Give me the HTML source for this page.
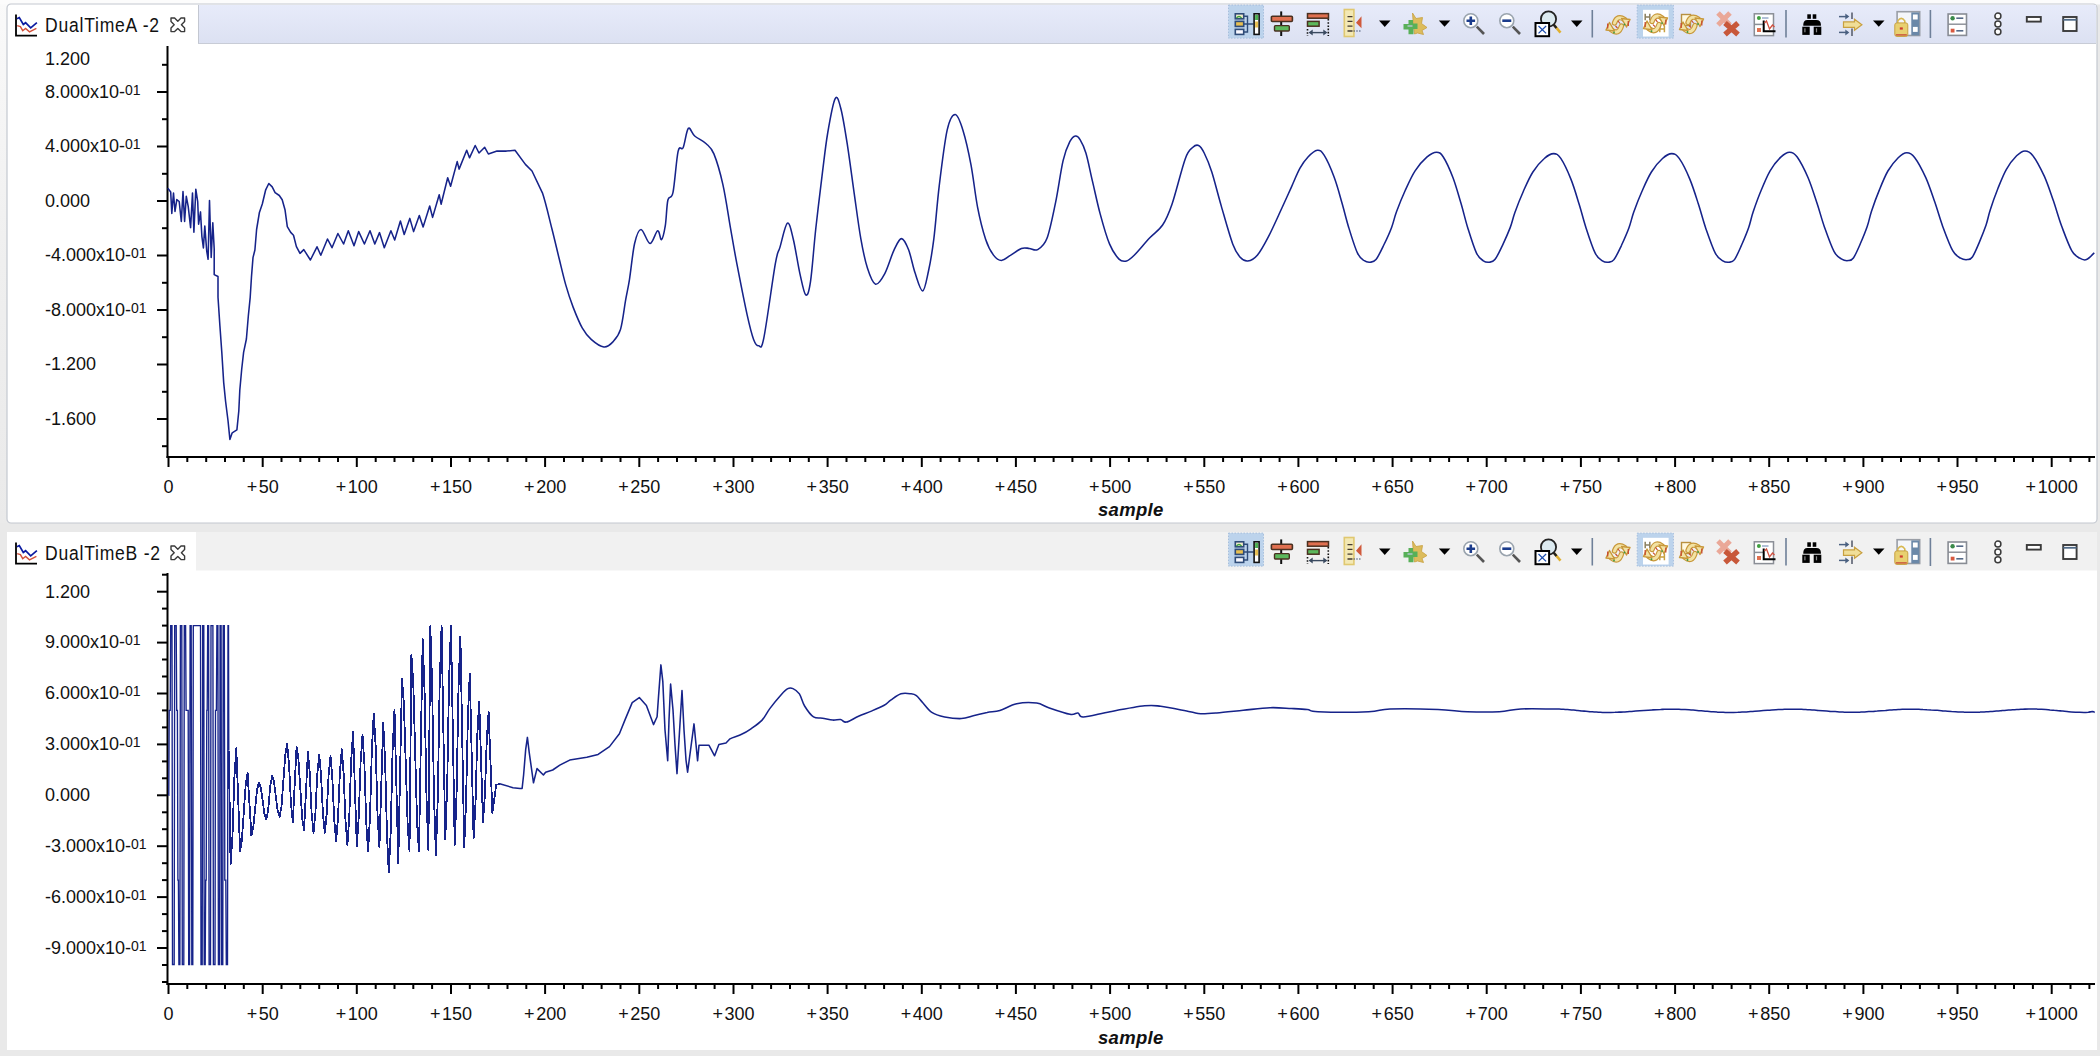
<!DOCTYPE html>
<html><head><meta charset="utf-8"><title>DualTime</title>
<style>
html,body{margin:0;padding:0;width:2100px;height:1056px;overflow:hidden;background:#e9e9e9;}
svg{display:block;font-family:"Liberation Sans", sans-serif;}
</style></head><body>
<svg width="2100" height="1056" viewBox="0 0 2100 1056" fill="#111">
<rect x="0" y="0" width="2100" height="1056" fill="#e9e9e9"/>
<defs><linearGradient id="tb" x1="0" y1="0" x2="0" y2="1"><stop offset="0" stop-color="#e7ebfa"/><stop offset="1" stop-color="#dce1f2"/></linearGradient><linearGradient id="ls" x1="0" y1="0" x2="0" y2="1"><stop offset="0" stop-color="#fafafa"/><stop offset="0.5" stop-color="#efefef"/><stop offset="1" stop-color="#eaeaea"/></linearGradient></defs>
<rect x="0" y="0" width="8" height="523" fill="url(#ls)"/>
<rect x="0" y="0" width="2100" height="4.5" fill="#fcfcfc"/>
<rect x="7" y="4" width="2090" height="519" rx="4" fill="#fff" stroke="#c4c8d0" stroke-width="1.2"/>
<rect x="198" y="5" width="1898" height="38.5" fill="url(#tb)"/>
<line x1="198.5" y1="5" x2="198.5" y2="43.5" stroke="#c3c7d1"/>
<line x1="198" y1="43.5" x2="2096" y2="43.5" stroke="#c8ccd6"/>
<g transform="translate(15 14)"><path d="M1 0.5 V21.6 H22" fill="none" stroke="#000" stroke-width="1.8"/><path d="M2 4.8 L4.3 3.6 L8.3 10.4 L10.6 8.7 L15.7 13.8 L21.9 8.7" fill="none" stroke="#0a1aa0" stroke-width="1.7"/><path d="M2.2 11.6 L5.4 12.7 L7.7 16.7 L10.6 14.4 L14.5 17.8 L21.4 14.4" fill="none" stroke="#d2503a" stroke-width="1.4"/></g>
<text transform="translate(45 31.5) scale(0.9 1)" x="0" y="0" font-size="19.5" letter-spacing="0.85">DualTimeA -2</text>
<g transform="translate(170 17)"><path d="M1 1 H4.6 L7.8 4.2 L11 1 H14.6 V4.6 L11.4 7.8 L14.6 11 V14.6 H11 L7.8 11.4 L4.6 14.6 H1 V11 L4.2 7.8 L1 4.6 Z" fill="#fff" stroke="#3a3a3a" stroke-width="1.4" stroke-linejoin="round"/></g>
<rect x="1228.5" y="5.1" width="35" height="33" fill="#bcd3ec" stroke="#a6bedc" stroke-width="1" stroke-dasharray="1.5 1.5"/><g transform="translate(1234.5 13)"><rect x="0.8" y="0.8" width="8.4" height="5" fill="#f4eccc" stroke="#2f4c78" stroke-width="1.6"/><path d="M2 5 q2.5 -3 5 0" fill="none" stroke="#3aa040" stroke-width="1.4"/><rect x="0.8" y="8.4" width="8.4" height="5" fill="#e8bf50" stroke="#2f4c78" stroke-width="1.6"/><rect x="0.8" y="16.4" width="8.4" height="5" fill="#f8f8ff" stroke="#2f4c78" stroke-width="1.6"/><path d="M9 3.3 H13 V19 H9 M9 11 H19" fill="none" stroke="#2f4c78" stroke-width="1.4"/><rect x="19.6" y="0.8" width="5" height="20.6" fill="#fff" stroke="#111" stroke-width="1.6"/><rect x="20.6" y="2" width="3" height="5" fill="#4caf50"/><rect x="20.6" y="8.5" width="3" height="6" fill="#e8bf50"/></g>
<g transform="translate(1270.5 11.4)"><line x1="10.7" y1="0" x2="10.7" y2="24.6" stroke="#111" stroke-width="2"/><rect x="0.9" y="4.9" width="21" height="5.2" rx="1" fill="#e07050" stroke="#4a3020" stroke-width="1.6"/><rect x="4" y="14.2" width="14.8" height="5.4" rx="1" fill="#5cb85c" stroke="#4a3020" stroke-width="1.4"/></g>
<g transform="translate(1306.7 13)"><rect x="0.8" y="0.6" width="21" height="4.6" fill="#e07050" stroke="#4a3020" stroke-width="1.5"/><rect x="0.8" y="8.4" width="11.6" height="4.8" fill="#5cb85c" stroke="#4a3020" stroke-width="1.5"/><path d="M0.8 16 V23 M21.6 6 V23" stroke="#111" stroke-width="1.6" stroke-dasharray="1.6 1.6"/><path d="M3 19.6 H19.5" stroke="#3a4a60" stroke-width="1.4"/><path d="M2 19.6 l4 -3 v6 z M20.6 19.6 l-4 -3 v6 z" fill="#3a4a60"/></g>
<g transform="translate(1343.5 8.7)"><rect x="0.8" y="0.8" width="9.6" height="27" fill="#f3e8b4" stroke="#e0c870" stroke-width="1.6"/><path d="M4 8 H9 M4 12.6 H9 M4 17.4 H9 M4 22.3 H9" stroke="#443a30" stroke-width="1.3"/><path d="M18 7.5 L12.5 14 L18 19.5 Z" fill="#d05a3c"/><path d="M10 22.3 H17" stroke="#304060" stroke-width="1.2" stroke-dasharray="1.4 1.4"/></g>
<path d="M1379 20.6 h11.5 l-5.75 6.3 z" fill="#000"/>
<g transform="translate(1402.5 12.5)"><path d="M10 0.5 L13.5 6 L20 5 L19 11 L24.5 15 L19.5 18 L21 22 L15 20.5 L12 21.5 L11 14 Z" fill="#dcbc5c" stroke="#c8a040" stroke-width="0.8"/><path d="M6 7.5 H10.5 V11 H15 V16.5 H11 V21.8 H6 V17 H1 V11.5 H6 Z" fill="#58b058"/><path d="M5 13.5 h5" stroke="#b8c8d8" stroke-width="1.4"/></g>
<path d="M1438.8 20.5 h11.5 l-5.75 6.3 z" fill="#000"/>
<g transform="translate(1462.5 12.4)"><circle cx="8.3" cy="8.3" r="7" fill="#fff" stroke="#9aa4ae" stroke-width="1.6"/><path d="M8.3 4 V12.6 M4 8.3 H12.6" stroke="#1b3c8c" stroke-width="2.6"/><path d="M14.3 14.3 L21.5 21.6" stroke="#555" stroke-width="2.6"/></g>
<g transform="translate(1498.5 12.4)"><circle cx="8.3" cy="8.3" r="7" fill="#fff" stroke="#9aa4ae" stroke-width="1.6"/><path d="M3.8 8.3 H12.8" stroke="#1b3c8c" stroke-width="2.6"/><path d="M14.3 14.3 L21.5 21.6" stroke="#555" stroke-width="2.6"/></g>
<g transform="translate(1534.5 10)"><circle cx="14" cy="9" r="7.6" fill="#dceaf0" stroke="#222" stroke-width="1.8"/><path d="M19.5 15 L26 22.6" stroke="#e0b030" stroke-width="2.6"/><path d="M19 14.5 L22 18" stroke="#222" stroke-width="2.4"/><rect x="1" y="13" width="13.6" height="13.2" fill="#fff" stroke="#000" stroke-width="2"/><path d="M4 16 L11.6 23.4 M11.6 16 L4 23.4" stroke="#2050b0" stroke-width="1.3"/></g>
<path d="M1571 20.6 h11.5 l-5.75 6.3 z" fill="#000"/>
<line x1="1592.3" y1="10" x2="1592.3" y2="37.5" stroke="#6f8099" stroke-width="1.6"/>
<g transform="translate(1606.5 12)"><path d="M8 11 Q11 2.5 18 7.5" fill="none" stroke="#c8983a" stroke-width="5.4" stroke-linecap="round"/><path d="M8 11 Q11 2.5 18 7.5" fill="none" stroke="#f2e2a4" stroke-width="3" stroke-linecap="round"/><path d="M15 14 Q12 23.5 5 18" fill="none" stroke="#c8983a" stroke-width="5.4" stroke-linecap="round"/><path d="M15 14 Q12 23.5 5 18" fill="none" stroke="#f2e2a4" stroke-width="3" stroke-linecap="round"/><path d="M15 6.5 L23.5 7.5 L20 15 Z" fill="#f2e2a4" stroke="#c8983a" stroke-width="1.4" stroke-linejoin="round"/><path d="M8 19 L-0.5 18 L3 10.5 Z" fill="#f2e2a4" stroke="#c8983a" stroke-width="1.4" stroke-linejoin="round"/><path d="M21.8 9 V14 M1.2 11.5 V16.5" stroke="#c84a30" stroke-width="1.3"/><path d="M11.5 9 l2 2.5 M11 16 l-2 -2" stroke="#c84a30" stroke-width="1.2"/><circle cx="18" cy="12.5" r="0.9" fill="#3a9a40"/><circle cx="7.5" cy="20.5" r="0.9" fill="#3a9a40"/></g>
<rect x="1637.2" y="5.1" width="36.2" height="33" fill="#bcd3ec" stroke="#a6bedc" stroke-width="1" stroke-dasharray="1.5 1.5"/><rect x="1643" y="9.8" width="25.6" height="26.7" fill="#fff"/><g transform="translate(1643 9.8)"><path d="M2.2 4 V10.5 M6.8 4 V10.5 M2.2 7.2 H6.8" stroke="#8a8060" stroke-width="1.5"/><path d="M16.8 16 V22.5 M21.4 16 V22.5 M16.8 19.2 H21.4" stroke="#c8a040" stroke-width="1.5"/><g transform="translate(1 0.5) scale(1 1.02)"><path d="M8 11 Q11 2.5 18 7.5" fill="none" stroke="#c8983a" stroke-width="5.4" stroke-linecap="round"/><path d="M8 11 Q11 2.5 18 7.5" fill="none" stroke="#f2e2a4" stroke-width="3" stroke-linecap="round"/><path d="M15 14 Q12 23.5 5 18" fill="none" stroke="#c8983a" stroke-width="5.4" stroke-linecap="round"/><path d="M15 14 Q12 23.5 5 18" fill="none" stroke="#f2e2a4" stroke-width="3" stroke-linecap="round"/><path d="M15 6.5 L23.5 7.5 L20 15 Z" fill="#f2e2a4" stroke="#c8983a" stroke-width="1.4" stroke-linejoin="round"/><path d="M8 19 L-0.5 18 L3 10.5 Z" fill="#f2e2a4" stroke="#c8983a" stroke-width="1.4" stroke-linejoin="round"/><path d="M21.8 9 V14 M1.2 11.5 V16.5" stroke="#c84a30" stroke-width="1.3"/><path d="M11.5 9 l2 2.5 M11 16 l-2 -2" stroke="#c84a30" stroke-width="1.2"/><circle cx="18" cy="12.5" r="0.9" fill="#3a9a40"/><circle cx="7.5" cy="20.5" r="0.9" fill="#3a9a40"/></g></g>
<g transform="translate(1678 11)"><rect x="3.5" y="3.5" width="9" height="11" fill="#fff8e0" stroke="#b89040" stroke-width="1.4"/><g transform="translate(2 0.5)"><path d="M8 11 Q11 2.5 18 7.5" fill="none" stroke="#c8983a" stroke-width="5.4" stroke-linecap="round"/><path d="M8 11 Q11 2.5 18 7.5" fill="none" stroke="#f2e2a4" stroke-width="3" stroke-linecap="round"/><path d="M15 14 Q12 23.5 5 18" fill="none" stroke="#c8983a" stroke-width="5.4" stroke-linecap="round"/><path d="M15 14 Q12 23.5 5 18" fill="none" stroke="#f2e2a4" stroke-width="3" stroke-linecap="round"/><path d="M15 6.5 L23.5 7.5 L20 15 Z" fill="#f2e2a4" stroke="#c8983a" stroke-width="1.4" stroke-linejoin="round"/><path d="M8 19 L-0.5 18 L3 10.5 Z" fill="#f2e2a4" stroke="#c8983a" stroke-width="1.4" stroke-linejoin="round"/><path d="M21.8 9 V14 M1.2 11.5 V16.5" stroke="#c84a30" stroke-width="1.3"/><path d="M11.5 9 l2 2.5 M11 16 l-2 -2" stroke="#c84a30" stroke-width="1.2"/><circle cx="18" cy="12.5" r="0.9" fill="#3a9a40"/><circle cx="7.5" cy="20.5" r="0.9" fill="#3a9a40"/></g></g>
<g transform="translate(1716 11)"><path d="M2 2 L14 14 M14 2 L2 14" stroke="#eaa898" stroke-width="5"/><path d="M9 12 L22 23.5 M22 12 L9 23.5" stroke="#c8583a" stroke-width="5.4"/></g>
<g transform="translate(1753.5 13)"><rect x="0.8" y="0.8" width="19.2" height="21.8" fill="#fff" stroke="#8a8e96" stroke-width="1.5"/><line x1="0.8" y1="11.4" x2="10" y2="11.4" stroke="#8a8e96" stroke-width="1.5"/><circle cx="5.4" cy="5" r="2" fill="#40a040"/><path d="M8.5 5 H15" stroke="#6080b0" stroke-width="1"/><rect x="3.5" y="15" width="4" height="4" fill="#e07050"/><path d="M10.2 7.5 V18.3 H22" fill="none" stroke="#000" stroke-width="2"/><path d="M11 10 L13 8 L16 16 L19 12 L21 14" fill="none" stroke="#d05040" stroke-width="1.3"/></g>
<line x1="1786" y1="10" x2="1786" y2="37.5" stroke="#6f8099" stroke-width="1.6"/>
<g transform="translate(1802.3 14.3)"><rect x="5" y="0" width="3.6" height="4.5" fill="#000"/><rect x="10.4" y="0" width="3.6" height="4.5" fill="#000"/><path d="M1 10.5 Q1 6 5 5.8 H14 Q18.6 6 18.6 10.5 V11.5 H1 Z" fill="#000"/><rect x="0" y="12.4" width="7.4" height="8.2" fill="#000"/><rect x="11.4" y="12.4" width="7.6" height="8.2" fill="#000"/><rect x="2" y="14" width="1.2" height="4" fill="#888"/><rect x="13.6" y="14" width="1.2" height="4" fill="#888"/></g>
<g transform="translate(1838.5 12.4)"><path d="M0.5 4.2 H9" stroke="#4a6080" stroke-width="1.5"/><path d="M10.8 4.2 l-4 -3 v6 z" fill="#4a6080"/><path d="M0.5 20 H9" stroke="#4a6080" stroke-width="1.5"/><path d="M10.8 20 l-4 -3 v6 z" fill="#4a6080"/><path d="M13.5 0 V6.5 M13.5 16 V23.5" stroke="#5a6070" stroke-width="1.6"/><path d="M5 9.5 H16 V6.8 L23.4 12.3 L16 17.8 V15 H5 Z" fill="#f0de98" stroke="#c8a040" stroke-width="1.2"/></g>
<path d="M1873 20.5 h11.5 l-5.75 6.3 z" fill="#000"/>
<g transform="translate(1894.3 10.9)"><rect x="2.8" y="0.8" width="22.6" height="23.8" fill="#f4f6fa" stroke="#9a9ea6" stroke-width="1.6"/><rect x="17" y="1.5" width="8" height="23" fill="#6a88a8"/><rect x="18.6" y="3.6" width="4.8" height="5" fill="#fff"/><rect x="18.6" y="16" width="4.8" height="5" fill="#fff"/><path d="M3.5 13 V10 Q7 5 10.5 10 V13" fill="none" stroke="#d8b850" stroke-width="1.6"/><rect x="0.5" y="12" width="13" height="13.5" rx="2" fill="#e8d070" stroke="#c8a040" stroke-width="1"/><rect x="5.5" y="16.5" width="3" height="2.2" fill="#d03a30"/><path d="M1.5 24 H12.5" stroke="#c8503a" stroke-width="1.4"/></g>
<line x1="1930.4" y1="10" x2="1930.4" y2="38" stroke="#6f8099" stroke-width="1.6"/>
<g transform="translate(1947.3 13.2)"><rect x="0.8" y="0.8" width="18.4" height="21.4" fill="#fff" stroke="#888c94" stroke-width="1.6"/><line x1="0.8" y1="11" x2="19.2" y2="11" stroke="#888c94" stroke-width="1.4"/><circle cx="5.3" cy="5" r="2.2" fill="#3a8a4a"/><path d="M9 5 H16" stroke="#556a88" stroke-width="1.6"/><rect x="3.4" y="15.5" width="3.8" height="3.8" fill="#d85a40"/><path d="M9 17.6 H16" stroke="#556a88" stroke-width="1.6"/></g>
<g transform="translate(1994 12.3)"><circle cx="3.9" cy="3.8" r="3" fill="#fff" stroke="#3a3a3a" stroke-width="1.5"/><circle cx="3.9" cy="11.7" r="3" fill="#fff" stroke="#3a3a3a" stroke-width="1.5"/><circle cx="3.9" cy="19.5" r="3" fill="#fff" stroke="#3a3a3a" stroke-width="1.5"/></g>
<rect x="2026.8" y="17" width="14" height="4.6" fill="#fff" stroke="#3a3a3a" stroke-width="1.9"/>
<rect x="2063.2" y="17" width="13.4" height="14" fill="#fff" stroke="#3a3a3a" stroke-width="1.9"/><line x1="2063.2" y1="19.8" x2="2076.6" y2="19.8" stroke="#4f6a88" stroke-width="1.8"/>
<rect x="7" y="532" width="2090" height="518" fill="#fff"/>
<rect x="196" y="532" width="1901" height="38.5" fill="#f1f1f1"/>
<g transform="translate(15 542)"><path d="M1 0.5 V21.6 H22" fill="none" stroke="#000" stroke-width="1.8"/><path d="M2 4.8 L4.3 3.6 L8.3 10.4 L10.6 8.7 L15.7 13.8 L21.9 8.7" fill="none" stroke="#0a1aa0" stroke-width="1.7"/><path d="M2.2 11.6 L5.4 12.7 L7.7 16.7 L10.6 14.4 L14.5 17.8 L21.4 14.4" fill="none" stroke="#d2503a" stroke-width="1.4"/></g>
<text transform="translate(45 559.5) scale(0.9 1)" x="0" y="0" font-size="19.5" letter-spacing="0.85">DualTimeB -2</text>
<g transform="translate(170 545)"><path d="M1 1 H4.6 L7.8 4.2 L11 1 H14.6 V4.6 L11.4 7.8 L14.6 11 V14.6 H11 L7.8 11.4 L4.6 14.6 H1 V11 L4.2 7.8 L1 4.6 Z" fill="#fff" stroke="#3a3a3a" stroke-width="1.4" stroke-linejoin="round"/></g>
<rect x="1228.5" y="533.1" width="35" height="33" fill="#bcd3ec" stroke="#a6bedc" stroke-width="1" stroke-dasharray="1.5 1.5"/><g transform="translate(1234.5 541)"><rect x="0.8" y="0.8" width="8.4" height="5" fill="#f4eccc" stroke="#2f4c78" stroke-width="1.6"/><path d="M2 5 q2.5 -3 5 0" fill="none" stroke="#3aa040" stroke-width="1.4"/><rect x="0.8" y="8.4" width="8.4" height="5" fill="#e8bf50" stroke="#2f4c78" stroke-width="1.6"/><rect x="0.8" y="16.4" width="8.4" height="5" fill="#f8f8ff" stroke="#2f4c78" stroke-width="1.6"/><path d="M9 3.3 H13 V19 H9 M9 11 H19" fill="none" stroke="#2f4c78" stroke-width="1.4"/><rect x="19.6" y="0.8" width="5" height="20.6" fill="#fff" stroke="#111" stroke-width="1.6"/><rect x="20.6" y="2" width="3" height="5" fill="#4caf50"/><rect x="20.6" y="8.5" width="3" height="6" fill="#e8bf50"/></g>
<g transform="translate(1270.5 539.4)"><line x1="10.7" y1="0" x2="10.7" y2="24.6" stroke="#111" stroke-width="2"/><rect x="0.9" y="4.9" width="21" height="5.2" rx="1" fill="#e07050" stroke="#4a3020" stroke-width="1.6"/><rect x="4" y="14.2" width="14.8" height="5.4" rx="1" fill="#5cb85c" stroke="#4a3020" stroke-width="1.4"/></g>
<g transform="translate(1306.7 541)"><rect x="0.8" y="0.6" width="21" height="4.6" fill="#e07050" stroke="#4a3020" stroke-width="1.5"/><rect x="0.8" y="8.4" width="11.6" height="4.8" fill="#5cb85c" stroke="#4a3020" stroke-width="1.5"/><path d="M0.8 16 V23 M21.6 6 V23" stroke="#111" stroke-width="1.6" stroke-dasharray="1.6 1.6"/><path d="M3 19.6 H19.5" stroke="#3a4a60" stroke-width="1.4"/><path d="M2 19.6 l4 -3 v6 z M20.6 19.6 l-4 -3 v6 z" fill="#3a4a60"/></g>
<g transform="translate(1343.5 536.7)"><rect x="0.8" y="0.8" width="9.6" height="27" fill="#f3e8b4" stroke="#e0c870" stroke-width="1.6"/><path d="M4 8 H9 M4 12.6 H9 M4 17.4 H9 M4 22.3 H9" stroke="#443a30" stroke-width="1.3"/><path d="M18 7.5 L12.5 14 L18 19.5 Z" fill="#d05a3c"/><path d="M10 22.3 H17" stroke="#304060" stroke-width="1.2" stroke-dasharray="1.4 1.4"/></g>
<path d="M1379 548.6 h11.5 l-5.75 6.3 z" fill="#000"/>
<g transform="translate(1402.5 540.5)"><path d="M10 0.5 L13.5 6 L20 5 L19 11 L24.5 15 L19.5 18 L21 22 L15 20.5 L12 21.5 L11 14 Z" fill="#dcbc5c" stroke="#c8a040" stroke-width="0.8"/><path d="M6 7.5 H10.5 V11 H15 V16.5 H11 V21.8 H6 V17 H1 V11.5 H6 Z" fill="#58b058"/><path d="M5 13.5 h5" stroke="#b8c8d8" stroke-width="1.4"/></g>
<path d="M1438.8 548.5 h11.5 l-5.75 6.3 z" fill="#000"/>
<g transform="translate(1462.5 540.4)"><circle cx="8.3" cy="8.3" r="7" fill="#fff" stroke="#9aa4ae" stroke-width="1.6"/><path d="M8.3 4 V12.6 M4 8.3 H12.6" stroke="#1b3c8c" stroke-width="2.6"/><path d="M14.3 14.3 L21.5 21.6" stroke="#555" stroke-width="2.6"/></g>
<g transform="translate(1498.5 540.4)"><circle cx="8.3" cy="8.3" r="7" fill="#fff" stroke="#9aa4ae" stroke-width="1.6"/><path d="M3.8 8.3 H12.8" stroke="#1b3c8c" stroke-width="2.6"/><path d="M14.3 14.3 L21.5 21.6" stroke="#555" stroke-width="2.6"/></g>
<g transform="translate(1534.5 538)"><circle cx="14" cy="9" r="7.6" fill="#dceaf0" stroke="#222" stroke-width="1.8"/><path d="M19.5 15 L26 22.6" stroke="#e0b030" stroke-width="2.6"/><path d="M19 14.5 L22 18" stroke="#222" stroke-width="2.4"/><rect x="1" y="13" width="13.6" height="13.2" fill="#fff" stroke="#000" stroke-width="2"/><path d="M4 16 L11.6 23.4 M11.6 16 L4 23.4" stroke="#2050b0" stroke-width="1.3"/></g>
<path d="M1571 548.6 h11.5 l-5.75 6.3 z" fill="#000"/>
<line x1="1592.3" y1="538" x2="1592.3" y2="565.5" stroke="#6f8099" stroke-width="1.6"/>
<g transform="translate(1606.5 540)"><path d="M8 11 Q11 2.5 18 7.5" fill="none" stroke="#c8983a" stroke-width="5.4" stroke-linecap="round"/><path d="M8 11 Q11 2.5 18 7.5" fill="none" stroke="#f2e2a4" stroke-width="3" stroke-linecap="round"/><path d="M15 14 Q12 23.5 5 18" fill="none" stroke="#c8983a" stroke-width="5.4" stroke-linecap="round"/><path d="M15 14 Q12 23.5 5 18" fill="none" stroke="#f2e2a4" stroke-width="3" stroke-linecap="round"/><path d="M15 6.5 L23.5 7.5 L20 15 Z" fill="#f2e2a4" stroke="#c8983a" stroke-width="1.4" stroke-linejoin="round"/><path d="M8 19 L-0.5 18 L3 10.5 Z" fill="#f2e2a4" stroke="#c8983a" stroke-width="1.4" stroke-linejoin="round"/><path d="M21.8 9 V14 M1.2 11.5 V16.5" stroke="#c84a30" stroke-width="1.3"/><path d="M11.5 9 l2 2.5 M11 16 l-2 -2" stroke="#c84a30" stroke-width="1.2"/><circle cx="18" cy="12.5" r="0.9" fill="#3a9a40"/><circle cx="7.5" cy="20.5" r="0.9" fill="#3a9a40"/></g>
<rect x="1637.2" y="533.1" width="36.2" height="33" fill="#bcd3ec" stroke="#a6bedc" stroke-width="1" stroke-dasharray="1.5 1.5"/><rect x="1643" y="537.8" width="25.6" height="26.7" fill="#fff"/><g transform="translate(1643 537.8)"><path d="M2.2 4 V10.5 M6.8 4 V10.5 M2.2 7.2 H6.8" stroke="#8a8060" stroke-width="1.5"/><path d="M16.8 16 V22.5 M21.4 16 V22.5 M16.8 19.2 H21.4" stroke="#c8a040" stroke-width="1.5"/><g transform="translate(1 0.5) scale(1 1.02)"><path d="M8 11 Q11 2.5 18 7.5" fill="none" stroke="#c8983a" stroke-width="5.4" stroke-linecap="round"/><path d="M8 11 Q11 2.5 18 7.5" fill="none" stroke="#f2e2a4" stroke-width="3" stroke-linecap="round"/><path d="M15 14 Q12 23.5 5 18" fill="none" stroke="#c8983a" stroke-width="5.4" stroke-linecap="round"/><path d="M15 14 Q12 23.5 5 18" fill="none" stroke="#f2e2a4" stroke-width="3" stroke-linecap="round"/><path d="M15 6.5 L23.5 7.5 L20 15 Z" fill="#f2e2a4" stroke="#c8983a" stroke-width="1.4" stroke-linejoin="round"/><path d="M8 19 L-0.5 18 L3 10.5 Z" fill="#f2e2a4" stroke="#c8983a" stroke-width="1.4" stroke-linejoin="round"/><path d="M21.8 9 V14 M1.2 11.5 V16.5" stroke="#c84a30" stroke-width="1.3"/><path d="M11.5 9 l2 2.5 M11 16 l-2 -2" stroke="#c84a30" stroke-width="1.2"/><circle cx="18" cy="12.5" r="0.9" fill="#3a9a40"/><circle cx="7.5" cy="20.5" r="0.9" fill="#3a9a40"/></g></g>
<g transform="translate(1678 539)"><rect x="3.5" y="3.5" width="9" height="11" fill="#fff8e0" stroke="#b89040" stroke-width="1.4"/><g transform="translate(2 0.5)"><path d="M8 11 Q11 2.5 18 7.5" fill="none" stroke="#c8983a" stroke-width="5.4" stroke-linecap="round"/><path d="M8 11 Q11 2.5 18 7.5" fill="none" stroke="#f2e2a4" stroke-width="3" stroke-linecap="round"/><path d="M15 14 Q12 23.5 5 18" fill="none" stroke="#c8983a" stroke-width="5.4" stroke-linecap="round"/><path d="M15 14 Q12 23.5 5 18" fill="none" stroke="#f2e2a4" stroke-width="3" stroke-linecap="round"/><path d="M15 6.5 L23.5 7.5 L20 15 Z" fill="#f2e2a4" stroke="#c8983a" stroke-width="1.4" stroke-linejoin="round"/><path d="M8 19 L-0.5 18 L3 10.5 Z" fill="#f2e2a4" stroke="#c8983a" stroke-width="1.4" stroke-linejoin="round"/><path d="M21.8 9 V14 M1.2 11.5 V16.5" stroke="#c84a30" stroke-width="1.3"/><path d="M11.5 9 l2 2.5 M11 16 l-2 -2" stroke="#c84a30" stroke-width="1.2"/><circle cx="18" cy="12.5" r="0.9" fill="#3a9a40"/><circle cx="7.5" cy="20.5" r="0.9" fill="#3a9a40"/></g></g>
<g transform="translate(1716 539)"><path d="M2 2 L14 14 M14 2 L2 14" stroke="#eaa898" stroke-width="5"/><path d="M9 12 L22 23.5 M22 12 L9 23.5" stroke="#c8583a" stroke-width="5.4"/></g>
<g transform="translate(1753.5 541)"><rect x="0.8" y="0.8" width="19.2" height="21.8" fill="#fff" stroke="#8a8e96" stroke-width="1.5"/><line x1="0.8" y1="11.4" x2="10" y2="11.4" stroke="#8a8e96" stroke-width="1.5"/><circle cx="5.4" cy="5" r="2" fill="#40a040"/><path d="M8.5 5 H15" stroke="#6080b0" stroke-width="1"/><rect x="3.5" y="15" width="4" height="4" fill="#e07050"/><path d="M10.2 7.5 V18.3 H22" fill="none" stroke="#000" stroke-width="2"/><path d="M11 10 L13 8 L16 16 L19 12 L21 14" fill="none" stroke="#d05040" stroke-width="1.3"/></g>
<line x1="1786" y1="538" x2="1786" y2="565.5" stroke="#6f8099" stroke-width="1.6"/>
<g transform="translate(1802.3 542.3)"><rect x="5" y="0" width="3.6" height="4.5" fill="#000"/><rect x="10.4" y="0" width="3.6" height="4.5" fill="#000"/><path d="M1 10.5 Q1 6 5 5.8 H14 Q18.6 6 18.6 10.5 V11.5 H1 Z" fill="#000"/><rect x="0" y="12.4" width="7.4" height="8.2" fill="#000"/><rect x="11.4" y="12.4" width="7.6" height="8.2" fill="#000"/><rect x="2" y="14" width="1.2" height="4" fill="#888"/><rect x="13.6" y="14" width="1.2" height="4" fill="#888"/></g>
<g transform="translate(1838.5 540.4)"><path d="M0.5 4.2 H9" stroke="#4a6080" stroke-width="1.5"/><path d="M10.8 4.2 l-4 -3 v6 z" fill="#4a6080"/><path d="M0.5 20 H9" stroke="#4a6080" stroke-width="1.5"/><path d="M10.8 20 l-4 -3 v6 z" fill="#4a6080"/><path d="M13.5 0 V6.5 M13.5 16 V23.5" stroke="#5a6070" stroke-width="1.6"/><path d="M5 9.5 H16 V6.8 L23.4 12.3 L16 17.8 V15 H5 Z" fill="#f0de98" stroke="#c8a040" stroke-width="1.2"/></g>
<path d="M1873 548.5 h11.5 l-5.75 6.3 z" fill="#000"/>
<g transform="translate(1894.3 538.9)"><rect x="2.8" y="0.8" width="22.6" height="23.8" fill="#f4f6fa" stroke="#9a9ea6" stroke-width="1.6"/><rect x="17" y="1.5" width="8" height="23" fill="#6a88a8"/><rect x="18.6" y="3.6" width="4.8" height="5" fill="#fff"/><rect x="18.6" y="16" width="4.8" height="5" fill="#fff"/><path d="M3.5 13 V10 Q7 5 10.5 10 V13" fill="none" stroke="#d8b850" stroke-width="1.6"/><rect x="0.5" y="12" width="13" height="13.5" rx="2" fill="#e8d070" stroke="#c8a040" stroke-width="1"/><rect x="5.5" y="16.5" width="3" height="2.2" fill="#d03a30"/><path d="M1.5 24 H12.5" stroke="#c8503a" stroke-width="1.4"/></g>
<line x1="1930.4" y1="538" x2="1930.4" y2="566" stroke="#6f8099" stroke-width="1.6"/>
<g transform="translate(1947.3 541.2)"><rect x="0.8" y="0.8" width="18.4" height="21.4" fill="#fff" stroke="#888c94" stroke-width="1.6"/><line x1="0.8" y1="11" x2="19.2" y2="11" stroke="#888c94" stroke-width="1.4"/><circle cx="5.3" cy="5" r="2.2" fill="#3a8a4a"/><path d="M9 5 H16" stroke="#556a88" stroke-width="1.6"/><rect x="3.4" y="15.5" width="3.8" height="3.8" fill="#d85a40"/><path d="M9 17.6 H16" stroke="#556a88" stroke-width="1.6"/></g>
<g transform="translate(1994 540.3)"><circle cx="3.9" cy="3.8" r="3" fill="#fff" stroke="#3a3a3a" stroke-width="1.5"/><circle cx="3.9" cy="11.7" r="3" fill="#fff" stroke="#3a3a3a" stroke-width="1.5"/><circle cx="3.9" cy="19.5" r="3" fill="#fff" stroke="#3a3a3a" stroke-width="1.5"/></g>
<rect x="2026.8" y="545" width="14" height="4.6" fill="#fff" stroke="#3a3a3a" stroke-width="1.9"/>
<rect x="2063.2" y="545" width="13.4" height="14" fill="#fff" stroke="#3a3a3a" stroke-width="1.9"/><line x1="2063.2" y1="547.8" x2="2076.6" y2="547.8" stroke="#4f6a88" stroke-width="1.8"/>
<line x1="167.5" y1="46" x2="167.5" y2="458" stroke="#000" stroke-width="2"/>
<line x1="166.5" y1="457" x2="2095" y2="457" stroke="#000" stroke-width="2"/>
<line x1="157" y1="92" x2="167" y2="92" stroke="#000" stroke-width="2"/>
<line x1="157" y1="146.5" x2="167" y2="146.5" stroke="#000" stroke-width="2"/>
<line x1="157" y1="201" x2="167" y2="201" stroke="#000" stroke-width="2"/>
<line x1="157" y1="255.5" x2="167" y2="255.5" stroke="#000" stroke-width="2"/>
<line x1="157" y1="310" x2="167" y2="310" stroke="#000" stroke-width="2"/>
<line x1="157" y1="364.5" x2="167" y2="364.5" stroke="#000" stroke-width="2"/>
<line x1="157" y1="419" x2="167" y2="419" stroke="#000" stroke-width="2"/>
<line x1="162" y1="64.8" x2="167" y2="64.8" stroke="#000" stroke-width="2"/>
<line x1="162" y1="119.2" x2="167" y2="119.2" stroke="#000" stroke-width="2"/>
<line x1="162" y1="173.8" x2="167" y2="173.8" stroke="#000" stroke-width="2"/>
<line x1="162" y1="228.2" x2="167" y2="228.2" stroke="#000" stroke-width="2"/>
<line x1="162" y1="282.8" x2="167" y2="282.8" stroke="#000" stroke-width="2"/>
<line x1="162" y1="337.2" x2="167" y2="337.2" stroke="#000" stroke-width="2"/>
<line x1="162" y1="391.8" x2="167" y2="391.8" stroke="#000" stroke-width="2"/>
<line x1="162" y1="446.2" x2="167" y2="446.2" stroke="#000" stroke-width="2"/>
<text x="45" y="64.5" font-size="18">1.200</text>
<text x="45" y="97.8" font-size="18">8.000x10-<tspan font-size="14" dy="-3.2">01</tspan></text>
<text x="45" y="152.3" font-size="18">4.000x10-<tspan font-size="14" dy="-3.2">01</tspan></text>
<text x="45" y="206.8" font-size="18">0.000</text>
<text x="45" y="261.3" font-size="18">-4.000x10-<tspan font-size="14" dy="-3.2">01</tspan></text>
<text x="45" y="315.8" font-size="18">-8.000x10-<tspan font-size="14" dy="-3.2">01</tspan></text>
<text x="45" y="370.3" font-size="18">-1.200</text>
<text x="45" y="424.8" font-size="18">-1.600</text>
<line x1="168.5" y1="457" x2="168.5" y2="467" stroke="#000" stroke-width="2"/>
<text x="168.5" y="492.5" font-size="18" text-anchor="middle">0</text>
<line x1="187.3" y1="457" x2="187.3" y2="462" stroke="#000" stroke-width="2"/>
<line x1="206.2" y1="457" x2="206.2" y2="462" stroke="#000" stroke-width="2"/>
<line x1="225" y1="457" x2="225" y2="462" stroke="#000" stroke-width="2"/>
<line x1="243.8" y1="457" x2="243.8" y2="462" stroke="#000" stroke-width="2"/>
<line x1="262.7" y1="457" x2="262.7" y2="467" stroke="#000" stroke-width="2"/>
<text x="262.7" y="492.5" font-size="18" text-anchor="middle">+<tspan dx="1.6">50</tspan></text>
<line x1="281.5" y1="457" x2="281.5" y2="462" stroke="#000" stroke-width="2"/>
<line x1="300.3" y1="457" x2="300.3" y2="462" stroke="#000" stroke-width="2"/>
<line x1="319.2" y1="457" x2="319.2" y2="462" stroke="#000" stroke-width="2"/>
<line x1="338" y1="457" x2="338" y2="462" stroke="#000" stroke-width="2"/>
<line x1="356.8" y1="457" x2="356.8" y2="467" stroke="#000" stroke-width="2"/>
<text x="356.8" y="492.5" font-size="18" text-anchor="middle">+<tspan dx="1.6">100</tspan></text>
<line x1="375.7" y1="457" x2="375.7" y2="462" stroke="#000" stroke-width="2"/>
<line x1="394.5" y1="457" x2="394.5" y2="462" stroke="#000" stroke-width="2"/>
<line x1="413.3" y1="457" x2="413.3" y2="462" stroke="#000" stroke-width="2"/>
<line x1="432.1" y1="457" x2="432.1" y2="462" stroke="#000" stroke-width="2"/>
<line x1="451" y1="457" x2="451" y2="467" stroke="#000" stroke-width="2"/>
<text x="451" y="492.5" font-size="18" text-anchor="middle">+<tspan dx="1.6">150</tspan></text>
<line x1="469.8" y1="457" x2="469.8" y2="462" stroke="#000" stroke-width="2"/>
<line x1="488.6" y1="457" x2="488.6" y2="462" stroke="#000" stroke-width="2"/>
<line x1="507.5" y1="457" x2="507.5" y2="462" stroke="#000" stroke-width="2"/>
<line x1="526.3" y1="457" x2="526.3" y2="462" stroke="#000" stroke-width="2"/>
<line x1="545.1" y1="457" x2="545.1" y2="467" stroke="#000" stroke-width="2"/>
<text x="545.1" y="492.5" font-size="18" text-anchor="middle">+<tspan dx="1.6">200</tspan></text>
<line x1="564" y1="457" x2="564" y2="462" stroke="#000" stroke-width="2"/>
<line x1="582.8" y1="457" x2="582.8" y2="462" stroke="#000" stroke-width="2"/>
<line x1="601.6" y1="457" x2="601.6" y2="462" stroke="#000" stroke-width="2"/>
<line x1="620.5" y1="457" x2="620.5" y2="462" stroke="#000" stroke-width="2"/>
<line x1="639.3" y1="457" x2="639.3" y2="467" stroke="#000" stroke-width="2"/>
<text x="639.3" y="492.5" font-size="18" text-anchor="middle">+<tspan dx="1.6">250</tspan></text>
<line x1="658.1" y1="457" x2="658.1" y2="462" stroke="#000" stroke-width="2"/>
<line x1="677" y1="457" x2="677" y2="462" stroke="#000" stroke-width="2"/>
<line x1="695.8" y1="457" x2="695.8" y2="462" stroke="#000" stroke-width="2"/>
<line x1="714.6" y1="457" x2="714.6" y2="462" stroke="#000" stroke-width="2"/>
<line x1="733.5" y1="457" x2="733.5" y2="467" stroke="#000" stroke-width="2"/>
<text x="733.5" y="492.5" font-size="18" text-anchor="middle">+<tspan dx="1.6">300</tspan></text>
<line x1="752.3" y1="457" x2="752.3" y2="462" stroke="#000" stroke-width="2"/>
<line x1="771.1" y1="457" x2="771.1" y2="462" stroke="#000" stroke-width="2"/>
<line x1="790" y1="457" x2="790" y2="462" stroke="#000" stroke-width="2"/>
<line x1="808.8" y1="457" x2="808.8" y2="462" stroke="#000" stroke-width="2"/>
<line x1="827.6" y1="457" x2="827.6" y2="467" stroke="#000" stroke-width="2"/>
<text x="827.6" y="492.5" font-size="18" text-anchor="middle">+<tspan dx="1.6">350</tspan></text>
<line x1="846.5" y1="457" x2="846.5" y2="462" stroke="#000" stroke-width="2"/>
<line x1="865.3" y1="457" x2="865.3" y2="462" stroke="#000" stroke-width="2"/>
<line x1="884.1" y1="457" x2="884.1" y2="462" stroke="#000" stroke-width="2"/>
<line x1="902.9" y1="457" x2="902.9" y2="462" stroke="#000" stroke-width="2"/>
<line x1="921.8" y1="457" x2="921.8" y2="467" stroke="#000" stroke-width="2"/>
<text x="921.8" y="492.5" font-size="18" text-anchor="middle">+<tspan dx="1.6">400</tspan></text>
<line x1="940.6" y1="457" x2="940.6" y2="462" stroke="#000" stroke-width="2"/>
<line x1="959.4" y1="457" x2="959.4" y2="462" stroke="#000" stroke-width="2"/>
<line x1="978.3" y1="457" x2="978.3" y2="462" stroke="#000" stroke-width="2"/>
<line x1="997.1" y1="457" x2="997.1" y2="462" stroke="#000" stroke-width="2"/>
<line x1="1015.9" y1="457" x2="1015.9" y2="467" stroke="#000" stroke-width="2"/>
<text x="1015.9" y="492.5" font-size="18" text-anchor="middle">+<tspan dx="1.6">450</tspan></text>
<line x1="1034.8" y1="457" x2="1034.8" y2="462" stroke="#000" stroke-width="2"/>
<line x1="1053.6" y1="457" x2="1053.6" y2="462" stroke="#000" stroke-width="2"/>
<line x1="1072.4" y1="457" x2="1072.4" y2="462" stroke="#000" stroke-width="2"/>
<line x1="1091.3" y1="457" x2="1091.3" y2="462" stroke="#000" stroke-width="2"/>
<line x1="1110.1" y1="457" x2="1110.1" y2="467" stroke="#000" stroke-width="2"/>
<text x="1110.1" y="492.5" font-size="18" text-anchor="middle">+<tspan dx="1.6">500</tspan></text>
<line x1="1128.9" y1="457" x2="1128.9" y2="462" stroke="#000" stroke-width="2"/>
<line x1="1147.8" y1="457" x2="1147.8" y2="462" stroke="#000" stroke-width="2"/>
<line x1="1166.6" y1="457" x2="1166.6" y2="462" stroke="#000" stroke-width="2"/>
<line x1="1185.4" y1="457" x2="1185.4" y2="462" stroke="#000" stroke-width="2"/>
<line x1="1204.3" y1="457" x2="1204.3" y2="467" stroke="#000" stroke-width="2"/>
<text x="1204.3" y="492.5" font-size="18" text-anchor="middle">+<tspan dx="1.6">550</tspan></text>
<line x1="1223.1" y1="457" x2="1223.1" y2="462" stroke="#000" stroke-width="2"/>
<line x1="1241.9" y1="457" x2="1241.9" y2="462" stroke="#000" stroke-width="2"/>
<line x1="1260.8" y1="457" x2="1260.8" y2="462" stroke="#000" stroke-width="2"/>
<line x1="1279.6" y1="457" x2="1279.6" y2="462" stroke="#000" stroke-width="2"/>
<line x1="1298.4" y1="457" x2="1298.4" y2="467" stroke="#000" stroke-width="2"/>
<text x="1298.4" y="492.5" font-size="18" text-anchor="middle">+<tspan dx="1.6">600</tspan></text>
<line x1="1317.3" y1="457" x2="1317.3" y2="462" stroke="#000" stroke-width="2"/>
<line x1="1336.1" y1="457" x2="1336.1" y2="462" stroke="#000" stroke-width="2"/>
<line x1="1354.9" y1="457" x2="1354.9" y2="462" stroke="#000" stroke-width="2"/>
<line x1="1373.7" y1="457" x2="1373.7" y2="462" stroke="#000" stroke-width="2"/>
<line x1="1392.6" y1="457" x2="1392.6" y2="467" stroke="#000" stroke-width="2"/>
<text x="1392.6" y="492.5" font-size="18" text-anchor="middle">+<tspan dx="1.6">650</tspan></text>
<line x1="1411.4" y1="457" x2="1411.4" y2="462" stroke="#000" stroke-width="2"/>
<line x1="1430.2" y1="457" x2="1430.2" y2="462" stroke="#000" stroke-width="2"/>
<line x1="1449.1" y1="457" x2="1449.1" y2="462" stroke="#000" stroke-width="2"/>
<line x1="1467.9" y1="457" x2="1467.9" y2="462" stroke="#000" stroke-width="2"/>
<line x1="1486.7" y1="457" x2="1486.7" y2="467" stroke="#000" stroke-width="2"/>
<text x="1486.7" y="492.5" font-size="18" text-anchor="middle">+<tspan dx="1.6">700</tspan></text>
<line x1="1505.6" y1="457" x2="1505.6" y2="462" stroke="#000" stroke-width="2"/>
<line x1="1524.4" y1="457" x2="1524.4" y2="462" stroke="#000" stroke-width="2"/>
<line x1="1543.2" y1="457" x2="1543.2" y2="462" stroke="#000" stroke-width="2"/>
<line x1="1562.1" y1="457" x2="1562.1" y2="462" stroke="#000" stroke-width="2"/>
<line x1="1580.9" y1="457" x2="1580.9" y2="467" stroke="#000" stroke-width="2"/>
<text x="1580.9" y="492.5" font-size="18" text-anchor="middle">+<tspan dx="1.6">750</tspan></text>
<line x1="1599.7" y1="457" x2="1599.7" y2="462" stroke="#000" stroke-width="2"/>
<line x1="1618.6" y1="457" x2="1618.6" y2="462" stroke="#000" stroke-width="2"/>
<line x1="1637.4" y1="457" x2="1637.4" y2="462" stroke="#000" stroke-width="2"/>
<line x1="1656.2" y1="457" x2="1656.2" y2="462" stroke="#000" stroke-width="2"/>
<line x1="1675.1" y1="457" x2="1675.1" y2="467" stroke="#000" stroke-width="2"/>
<text x="1675.1" y="492.5" font-size="18" text-anchor="middle">+<tspan dx="1.6">800</tspan></text>
<line x1="1693.9" y1="457" x2="1693.9" y2="462" stroke="#000" stroke-width="2"/>
<line x1="1712.7" y1="457" x2="1712.7" y2="462" stroke="#000" stroke-width="2"/>
<line x1="1731.6" y1="457" x2="1731.6" y2="462" stroke="#000" stroke-width="2"/>
<line x1="1750.4" y1="457" x2="1750.4" y2="462" stroke="#000" stroke-width="2"/>
<line x1="1769.2" y1="457" x2="1769.2" y2="467" stroke="#000" stroke-width="2"/>
<text x="1769.2" y="492.5" font-size="18" text-anchor="middle">+<tspan dx="1.6">850</tspan></text>
<line x1="1788.1" y1="457" x2="1788.1" y2="462" stroke="#000" stroke-width="2"/>
<line x1="1806.9" y1="457" x2="1806.9" y2="462" stroke="#000" stroke-width="2"/>
<line x1="1825.7" y1="457" x2="1825.7" y2="462" stroke="#000" stroke-width="2"/>
<line x1="1844.5" y1="457" x2="1844.5" y2="462" stroke="#000" stroke-width="2"/>
<line x1="1863.4" y1="457" x2="1863.4" y2="467" stroke="#000" stroke-width="2"/>
<text x="1863.4" y="492.5" font-size="18" text-anchor="middle">+<tspan dx="1.6">900</tspan></text>
<line x1="1882.2" y1="457" x2="1882.2" y2="462" stroke="#000" stroke-width="2"/>
<line x1="1901" y1="457" x2="1901" y2="462" stroke="#000" stroke-width="2"/>
<line x1="1919.9" y1="457" x2="1919.9" y2="462" stroke="#000" stroke-width="2"/>
<line x1="1938.7" y1="457" x2="1938.7" y2="462" stroke="#000" stroke-width="2"/>
<line x1="1957.5" y1="457" x2="1957.5" y2="467" stroke="#000" stroke-width="2"/>
<text x="1957.5" y="492.5" font-size="18" text-anchor="middle">+<tspan dx="1.6">950</tspan></text>
<line x1="1976.4" y1="457" x2="1976.4" y2="462" stroke="#000" stroke-width="2"/>
<line x1="1995.2" y1="457" x2="1995.2" y2="462" stroke="#000" stroke-width="2"/>
<line x1="2014" y1="457" x2="2014" y2="462" stroke="#000" stroke-width="2"/>
<line x1="2032.9" y1="457" x2="2032.9" y2="462" stroke="#000" stroke-width="2"/>
<line x1="2051.7" y1="457" x2="2051.7" y2="467" stroke="#000" stroke-width="2"/>
<text x="2051.7" y="492.5" font-size="18" text-anchor="middle">+<tspan dx="1.6">1000</tspan></text>
<line x1="2070.5" y1="457" x2="2070.5" y2="462" stroke="#000" stroke-width="2"/>
<line x1="2089.4" y1="457" x2="2089.4" y2="462" stroke="#000" stroke-width="2"/>
<text x="1098" y="516" font-size="18.5" letter-spacing="0.3" font-weight="bold" font-style="italic">sample</text>
<line x1="167.5" y1="573" x2="167.5" y2="985" stroke="#000" stroke-width="2"/>
<line x1="166.5" y1="984" x2="2095" y2="984" stroke="#000" stroke-width="2"/>
<line x1="157" y1="591.7" x2="167" y2="591.7" stroke="#000" stroke-width="2"/>
<line x1="157" y1="642.6" x2="167" y2="642.6" stroke="#000" stroke-width="2"/>
<line x1="157" y1="693.5" x2="167" y2="693.5" stroke="#000" stroke-width="2"/>
<line x1="157" y1="744.4" x2="167" y2="744.4" stroke="#000" stroke-width="2"/>
<line x1="157" y1="795.3" x2="167" y2="795.3" stroke="#000" stroke-width="2"/>
<line x1="157" y1="846.2" x2="167" y2="846.2" stroke="#000" stroke-width="2"/>
<line x1="157" y1="897.1" x2="167" y2="897.1" stroke="#000" stroke-width="2"/>
<line x1="157" y1="948" x2="167" y2="948" stroke="#000" stroke-width="2"/>
<line x1="162" y1="574.7" x2="167" y2="574.7" stroke="#000" stroke-width="2"/>
<line x1="162" y1="608.6" x2="167" y2="608.6" stroke="#000" stroke-width="2"/>
<line x1="162" y1="625.6" x2="167" y2="625.6" stroke="#000" stroke-width="2"/>
<line x1="162" y1="659.5" x2="167" y2="659.5" stroke="#000" stroke-width="2"/>
<line x1="162" y1="676.5" x2="167" y2="676.5" stroke="#000" stroke-width="2"/>
<line x1="162" y1="710.4" x2="167" y2="710.4" stroke="#000" stroke-width="2"/>
<line x1="162" y1="727.4" x2="167" y2="727.4" stroke="#000" stroke-width="2"/>
<line x1="162" y1="761.4" x2="167" y2="761.4" stroke="#000" stroke-width="2"/>
<line x1="162" y1="778.3" x2="167" y2="778.3" stroke="#000" stroke-width="2"/>
<line x1="162" y1="812.3" x2="167" y2="812.3" stroke="#000" stroke-width="2"/>
<line x1="162" y1="829.2" x2="167" y2="829.2" stroke="#000" stroke-width="2"/>
<line x1="162" y1="863.2" x2="167" y2="863.2" stroke="#000" stroke-width="2"/>
<line x1="162" y1="880.1" x2="167" y2="880.1" stroke="#000" stroke-width="2"/>
<line x1="162" y1="914.1" x2="167" y2="914.1" stroke="#000" stroke-width="2"/>
<line x1="162" y1="931.1" x2="167" y2="931.1" stroke="#000" stroke-width="2"/>
<line x1="162" y1="965" x2="167" y2="965" stroke="#000" stroke-width="2"/>
<line x1="162" y1="982" x2="167" y2="982" stroke="#000" stroke-width="2"/>
<text x="45" y="597.5" font-size="18">1.200</text>
<text x="45" y="648.4" font-size="18">9.000x10-<tspan font-size="14" dy="-3.2">01</tspan></text>
<text x="45" y="699.3" font-size="18">6.000x10-<tspan font-size="14" dy="-3.2">01</tspan></text>
<text x="45" y="750.2" font-size="18">3.000x10-<tspan font-size="14" dy="-3.2">01</tspan></text>
<text x="45" y="801.1" font-size="18">0.000</text>
<text x="45" y="852" font-size="18">-3.000x10-<tspan font-size="14" dy="-3.2">01</tspan></text>
<text x="45" y="902.9" font-size="18">-6.000x10-<tspan font-size="14" dy="-3.2">01</tspan></text>
<text x="45" y="953.8" font-size="18">-9.000x10-<tspan font-size="14" dy="-3.2">01</tspan></text>
<line x1="168.5" y1="984" x2="168.5" y2="994" stroke="#000" stroke-width="2"/>
<text x="168.5" y="1019.5" font-size="18" text-anchor="middle">0</text>
<line x1="187.3" y1="984" x2="187.3" y2="989" stroke="#000" stroke-width="2"/>
<line x1="206.2" y1="984" x2="206.2" y2="989" stroke="#000" stroke-width="2"/>
<line x1="225" y1="984" x2="225" y2="989" stroke="#000" stroke-width="2"/>
<line x1="243.8" y1="984" x2="243.8" y2="989" stroke="#000" stroke-width="2"/>
<line x1="262.7" y1="984" x2="262.7" y2="994" stroke="#000" stroke-width="2"/>
<text x="262.7" y="1019.5" font-size="18" text-anchor="middle">+<tspan dx="1.6">50</tspan></text>
<line x1="281.5" y1="984" x2="281.5" y2="989" stroke="#000" stroke-width="2"/>
<line x1="300.3" y1="984" x2="300.3" y2="989" stroke="#000" stroke-width="2"/>
<line x1="319.2" y1="984" x2="319.2" y2="989" stroke="#000" stroke-width="2"/>
<line x1="338" y1="984" x2="338" y2="989" stroke="#000" stroke-width="2"/>
<line x1="356.8" y1="984" x2="356.8" y2="994" stroke="#000" stroke-width="2"/>
<text x="356.8" y="1019.5" font-size="18" text-anchor="middle">+<tspan dx="1.6">100</tspan></text>
<line x1="375.7" y1="984" x2="375.7" y2="989" stroke="#000" stroke-width="2"/>
<line x1="394.5" y1="984" x2="394.5" y2="989" stroke="#000" stroke-width="2"/>
<line x1="413.3" y1="984" x2="413.3" y2="989" stroke="#000" stroke-width="2"/>
<line x1="432.1" y1="984" x2="432.1" y2="989" stroke="#000" stroke-width="2"/>
<line x1="451" y1="984" x2="451" y2="994" stroke="#000" stroke-width="2"/>
<text x="451" y="1019.5" font-size="18" text-anchor="middle">+<tspan dx="1.6">150</tspan></text>
<line x1="469.8" y1="984" x2="469.8" y2="989" stroke="#000" stroke-width="2"/>
<line x1="488.6" y1="984" x2="488.6" y2="989" stroke="#000" stroke-width="2"/>
<line x1="507.5" y1="984" x2="507.5" y2="989" stroke="#000" stroke-width="2"/>
<line x1="526.3" y1="984" x2="526.3" y2="989" stroke="#000" stroke-width="2"/>
<line x1="545.1" y1="984" x2="545.1" y2="994" stroke="#000" stroke-width="2"/>
<text x="545.1" y="1019.5" font-size="18" text-anchor="middle">+<tspan dx="1.6">200</tspan></text>
<line x1="564" y1="984" x2="564" y2="989" stroke="#000" stroke-width="2"/>
<line x1="582.8" y1="984" x2="582.8" y2="989" stroke="#000" stroke-width="2"/>
<line x1="601.6" y1="984" x2="601.6" y2="989" stroke="#000" stroke-width="2"/>
<line x1="620.5" y1="984" x2="620.5" y2="989" stroke="#000" stroke-width="2"/>
<line x1="639.3" y1="984" x2="639.3" y2="994" stroke="#000" stroke-width="2"/>
<text x="639.3" y="1019.5" font-size="18" text-anchor="middle">+<tspan dx="1.6">250</tspan></text>
<line x1="658.1" y1="984" x2="658.1" y2="989" stroke="#000" stroke-width="2"/>
<line x1="677" y1="984" x2="677" y2="989" stroke="#000" stroke-width="2"/>
<line x1="695.8" y1="984" x2="695.8" y2="989" stroke="#000" stroke-width="2"/>
<line x1="714.6" y1="984" x2="714.6" y2="989" stroke="#000" stroke-width="2"/>
<line x1="733.5" y1="984" x2="733.5" y2="994" stroke="#000" stroke-width="2"/>
<text x="733.5" y="1019.5" font-size="18" text-anchor="middle">+<tspan dx="1.6">300</tspan></text>
<line x1="752.3" y1="984" x2="752.3" y2="989" stroke="#000" stroke-width="2"/>
<line x1="771.1" y1="984" x2="771.1" y2="989" stroke="#000" stroke-width="2"/>
<line x1="790" y1="984" x2="790" y2="989" stroke="#000" stroke-width="2"/>
<line x1="808.8" y1="984" x2="808.8" y2="989" stroke="#000" stroke-width="2"/>
<line x1="827.6" y1="984" x2="827.6" y2="994" stroke="#000" stroke-width="2"/>
<text x="827.6" y="1019.5" font-size="18" text-anchor="middle">+<tspan dx="1.6">350</tspan></text>
<line x1="846.5" y1="984" x2="846.5" y2="989" stroke="#000" stroke-width="2"/>
<line x1="865.3" y1="984" x2="865.3" y2="989" stroke="#000" stroke-width="2"/>
<line x1="884.1" y1="984" x2="884.1" y2="989" stroke="#000" stroke-width="2"/>
<line x1="902.9" y1="984" x2="902.9" y2="989" stroke="#000" stroke-width="2"/>
<line x1="921.8" y1="984" x2="921.8" y2="994" stroke="#000" stroke-width="2"/>
<text x="921.8" y="1019.5" font-size="18" text-anchor="middle">+<tspan dx="1.6">400</tspan></text>
<line x1="940.6" y1="984" x2="940.6" y2="989" stroke="#000" stroke-width="2"/>
<line x1="959.4" y1="984" x2="959.4" y2="989" stroke="#000" stroke-width="2"/>
<line x1="978.3" y1="984" x2="978.3" y2="989" stroke="#000" stroke-width="2"/>
<line x1="997.1" y1="984" x2="997.1" y2="989" stroke="#000" stroke-width="2"/>
<line x1="1015.9" y1="984" x2="1015.9" y2="994" stroke="#000" stroke-width="2"/>
<text x="1015.9" y="1019.5" font-size="18" text-anchor="middle">+<tspan dx="1.6">450</tspan></text>
<line x1="1034.8" y1="984" x2="1034.8" y2="989" stroke="#000" stroke-width="2"/>
<line x1="1053.6" y1="984" x2="1053.6" y2="989" stroke="#000" stroke-width="2"/>
<line x1="1072.4" y1="984" x2="1072.4" y2="989" stroke="#000" stroke-width="2"/>
<line x1="1091.3" y1="984" x2="1091.3" y2="989" stroke="#000" stroke-width="2"/>
<line x1="1110.1" y1="984" x2="1110.1" y2="994" stroke="#000" stroke-width="2"/>
<text x="1110.1" y="1019.5" font-size="18" text-anchor="middle">+<tspan dx="1.6">500</tspan></text>
<line x1="1128.9" y1="984" x2="1128.9" y2="989" stroke="#000" stroke-width="2"/>
<line x1="1147.8" y1="984" x2="1147.8" y2="989" stroke="#000" stroke-width="2"/>
<line x1="1166.6" y1="984" x2="1166.6" y2="989" stroke="#000" stroke-width="2"/>
<line x1="1185.4" y1="984" x2="1185.4" y2="989" stroke="#000" stroke-width="2"/>
<line x1="1204.3" y1="984" x2="1204.3" y2="994" stroke="#000" stroke-width="2"/>
<text x="1204.3" y="1019.5" font-size="18" text-anchor="middle">+<tspan dx="1.6">550</tspan></text>
<line x1="1223.1" y1="984" x2="1223.1" y2="989" stroke="#000" stroke-width="2"/>
<line x1="1241.9" y1="984" x2="1241.9" y2="989" stroke="#000" stroke-width="2"/>
<line x1="1260.8" y1="984" x2="1260.8" y2="989" stroke="#000" stroke-width="2"/>
<line x1="1279.6" y1="984" x2="1279.6" y2="989" stroke="#000" stroke-width="2"/>
<line x1="1298.4" y1="984" x2="1298.4" y2="994" stroke="#000" stroke-width="2"/>
<text x="1298.4" y="1019.5" font-size="18" text-anchor="middle">+<tspan dx="1.6">600</tspan></text>
<line x1="1317.3" y1="984" x2="1317.3" y2="989" stroke="#000" stroke-width="2"/>
<line x1="1336.1" y1="984" x2="1336.1" y2="989" stroke="#000" stroke-width="2"/>
<line x1="1354.9" y1="984" x2="1354.9" y2="989" stroke="#000" stroke-width="2"/>
<line x1="1373.7" y1="984" x2="1373.7" y2="989" stroke="#000" stroke-width="2"/>
<line x1="1392.6" y1="984" x2="1392.6" y2="994" stroke="#000" stroke-width="2"/>
<text x="1392.6" y="1019.5" font-size="18" text-anchor="middle">+<tspan dx="1.6">650</tspan></text>
<line x1="1411.4" y1="984" x2="1411.4" y2="989" stroke="#000" stroke-width="2"/>
<line x1="1430.2" y1="984" x2="1430.2" y2="989" stroke="#000" stroke-width="2"/>
<line x1="1449.1" y1="984" x2="1449.1" y2="989" stroke="#000" stroke-width="2"/>
<line x1="1467.9" y1="984" x2="1467.9" y2="989" stroke="#000" stroke-width="2"/>
<line x1="1486.7" y1="984" x2="1486.7" y2="994" stroke="#000" stroke-width="2"/>
<text x="1486.7" y="1019.5" font-size="18" text-anchor="middle">+<tspan dx="1.6">700</tspan></text>
<line x1="1505.6" y1="984" x2="1505.6" y2="989" stroke="#000" stroke-width="2"/>
<line x1="1524.4" y1="984" x2="1524.4" y2="989" stroke="#000" stroke-width="2"/>
<line x1="1543.2" y1="984" x2="1543.2" y2="989" stroke="#000" stroke-width="2"/>
<line x1="1562.1" y1="984" x2="1562.1" y2="989" stroke="#000" stroke-width="2"/>
<line x1="1580.9" y1="984" x2="1580.9" y2="994" stroke="#000" stroke-width="2"/>
<text x="1580.9" y="1019.5" font-size="18" text-anchor="middle">+<tspan dx="1.6">750</tspan></text>
<line x1="1599.7" y1="984" x2="1599.7" y2="989" stroke="#000" stroke-width="2"/>
<line x1="1618.6" y1="984" x2="1618.6" y2="989" stroke="#000" stroke-width="2"/>
<line x1="1637.4" y1="984" x2="1637.4" y2="989" stroke="#000" stroke-width="2"/>
<line x1="1656.2" y1="984" x2="1656.2" y2="989" stroke="#000" stroke-width="2"/>
<line x1="1675.1" y1="984" x2="1675.1" y2="994" stroke="#000" stroke-width="2"/>
<text x="1675.1" y="1019.5" font-size="18" text-anchor="middle">+<tspan dx="1.6">800</tspan></text>
<line x1="1693.9" y1="984" x2="1693.9" y2="989" stroke="#000" stroke-width="2"/>
<line x1="1712.7" y1="984" x2="1712.7" y2="989" stroke="#000" stroke-width="2"/>
<line x1="1731.6" y1="984" x2="1731.6" y2="989" stroke="#000" stroke-width="2"/>
<line x1="1750.4" y1="984" x2="1750.4" y2="989" stroke="#000" stroke-width="2"/>
<line x1="1769.2" y1="984" x2="1769.2" y2="994" stroke="#000" stroke-width="2"/>
<text x="1769.2" y="1019.5" font-size="18" text-anchor="middle">+<tspan dx="1.6">850</tspan></text>
<line x1="1788.1" y1="984" x2="1788.1" y2="989" stroke="#000" stroke-width="2"/>
<line x1="1806.9" y1="984" x2="1806.9" y2="989" stroke="#000" stroke-width="2"/>
<line x1="1825.7" y1="984" x2="1825.7" y2="989" stroke="#000" stroke-width="2"/>
<line x1="1844.5" y1="984" x2="1844.5" y2="989" stroke="#000" stroke-width="2"/>
<line x1="1863.4" y1="984" x2="1863.4" y2="994" stroke="#000" stroke-width="2"/>
<text x="1863.4" y="1019.5" font-size="18" text-anchor="middle">+<tspan dx="1.6">900</tspan></text>
<line x1="1882.2" y1="984" x2="1882.2" y2="989" stroke="#000" stroke-width="2"/>
<line x1="1901" y1="984" x2="1901" y2="989" stroke="#000" stroke-width="2"/>
<line x1="1919.9" y1="984" x2="1919.9" y2="989" stroke="#000" stroke-width="2"/>
<line x1="1938.7" y1="984" x2="1938.7" y2="989" stroke="#000" stroke-width="2"/>
<line x1="1957.5" y1="984" x2="1957.5" y2="994" stroke="#000" stroke-width="2"/>
<text x="1957.5" y="1019.5" font-size="18" text-anchor="middle">+<tspan dx="1.6">950</tspan></text>
<line x1="1976.4" y1="984" x2="1976.4" y2="989" stroke="#000" stroke-width="2"/>
<line x1="1995.2" y1="984" x2="1995.2" y2="989" stroke="#000" stroke-width="2"/>
<line x1="2014" y1="984" x2="2014" y2="989" stroke="#000" stroke-width="2"/>
<line x1="2032.9" y1="984" x2="2032.9" y2="989" stroke="#000" stroke-width="2"/>
<line x1="2051.7" y1="984" x2="2051.7" y2="994" stroke="#000" stroke-width="2"/>
<text x="2051.7" y="1019.5" font-size="18" text-anchor="middle">+<tspan dx="1.6">1000</tspan></text>
<line x1="2070.5" y1="984" x2="2070.5" y2="989" stroke="#000" stroke-width="2"/>
<line x1="2089.4" y1="984" x2="2089.4" y2="989" stroke="#000" stroke-width="2"/>
<text x="1098" y="1043.6" font-size="18.5" letter-spacing="0.3" font-weight="bold" font-style="italic">sample</text>
<path d="M167.8 188.3 L170.7 192 L171.8 213.4 L173.5 193 L175 211.5 L176.8 199.6 L179.2 201.5 L181.3 221.4 L183 191.6 L184.6 221.4 L186.3 196.3 L188.2 206.3 L190.6 227.6 L192.5 193 L193.9 232.3 L195.8 189.2 L197.7 201.5 L198.6 224.2 L200.5 211.9 L201.9 236.6 L203.4 247.9 L204.8 226.1 L206.7 250.8 L208.1 259.3 L209.5 200.6 L211.2 257.4 L212.8 222.8 L214.2 248.9 L214.2 274.6 L218 276.5 L218 297.3 L219.9 325.8 L221.8 352.3 L223.7 382.6 L225.6 401.5 L228 420.5 L229.9 439.4 L232.2 432.8 L236.9 429.9 L238.8 411 L239.8 390.2 L241.7 369.3 L243.6 352.3 L246.4 339 L248.3 316.3 L250.2 297.3 L251.5 276.5 L253 257.6 L254.9 250 L256.6 229.5 L259.4 212.5 L262.3 204 L265.7 189.8 L268.8 183.5 L272.2 186.9 L275.1 192.6 L279.3 195.5 L282.2 199.7 L285 209.7 L287.3 226.7 L290.7 232.4 L293.5 235.2 L296.4 246.6 L300 253.4 L303.8 249.6 L310.4 260 L317 246.8 L320.8 255.3 L327.5 239 L332 247.7 L337.9 233.5 L343.6 244 L348.3 230.7 L354 245.8 L358.7 231.6 L364.4 244 L370 230.7 L374.8 244 L379.5 232.6 L384.3 247.7 L390.9 230.7 L394.7 240 L400.4 221 L404.2 234.5 L409.8 218.4 L413.6 231.6 L419.3 215.5 L423.1 226.9 L429.7 206 L432.6 217.4 L439.2 194.7 L441.1 204.2 L447.7 177.7 L450.6 186.2 L457.2 161.6 L459.1 169.1 L466.7 150.2 L469.5 157.8 L475.2 145.5 L479 153 L484.7 147.3 L488.4 154 L497 151.1 L506.4 151.1 L515 150.2 L525.4 164.4 L532 171 L542.4 192.8 C545.7 202.4 549.1 217.8 551.9 228.8 C554.7 239.8 556.9 249.5 559.2 258.8 C561.5 268.1 563.3 276.3 565.6 284.4 C567.9 292.5 570.4 300.1 573.2 307.4 C576 314.6 579.2 322.6 582.2 327.9 C585.2 333.2 587.6 336.2 591.2 339.4 C594.8 342.6 600.3 346.6 603.9 347 C607.5 347.4 610.1 344.9 612.9 341.9 C615.7 338.9 618.5 336.1 620.6 329.1 C622.7 322.1 624.2 308 625.7 299.7 C627.2 291.4 628 288.7 629.5 279.3 C631 269.9 632.7 251.8 634.6 243.5 C636.5 235.2 638.4 229.4 641 229.4 C643.6 229.4 647.2 243.3 650 243.5 C652.8 243.7 655.7 231.3 657.6 230.7 C659.5 230 660.2 240.4 661.5 239.6 C662.8 238.8 664.2 232.2 665.3 225.6 C666.4 219 666.6 205.6 667.9 200 C669.2 194.4 671.3 200.4 673 192.3 C674.7 184.2 676.4 158.9 678.1 151.4 C679.8 143.9 681.5 151.3 683.2 147.5 C684.9 143.7 686.4 130.3 688.3 128.4 C690.2 126.5 691.7 133.4 694.7 136 C697.7 138.6 703 140.7 706.2 143.7 C709.4 146.7 711.1 147.1 713.9 153.9 C716.7 160.7 720.1 172.2 722.9 184.6 C725.7 197 728.2 214.9 730.5 228.1 C732.8 241.3 734.1 249.4 736.9 263.9 C739.7 278.4 744.4 302.5 747.2 315.1 C750 327.7 751.7 334.3 753.6 339.4 C755.5 344.5 757 346 758.7 345.8 C760.4 345.6 761 351.8 763.8 338.1 C766.6 324.5 772.6 279.1 775.3 263.9 C778 248.7 778 253.9 780 247.1 C782 240.3 785.2 224.5 787.4 223.2 C789.6 221.9 791.2 230.8 793.3 239.2 C795.4 247.6 797.8 264.3 799.9 273.6 C802 282.9 803.9 293.6 805.7 294.9 C807.5 296.2 808.8 292.7 810.5 281.6 C812.2 270.5 813.8 246.6 815.8 228.5 C817.8 210.4 820.4 188.7 822.4 172.8 C824.4 156.9 825.6 145.4 827.7 133 C829.8 120.6 833 102.6 835.2 98.6 C837.4 94.6 838.9 101.2 841 109.2 C843.1 117.2 845.4 132.2 847.6 146.3 C849.8 160.5 852.1 178.6 854.3 194.1 C856.5 209.6 858.7 226.8 860.9 239.2 C863.1 251.6 865.1 260.8 867.5 268.3 C869.9 275.8 872.6 283.3 875.5 284.2 C878.4 285.1 881.7 279.3 884.8 273.6 C887.9 267.9 891.3 255.6 894.1 249.8 C896.9 244 899.1 238.6 901.5 238.6 C903.9 238.6 906.3 244 908.6 249.8 C910.9 255.6 912.9 266.8 915.3 273.6 C917.6 280.5 920.5 291.3 922.7 290.9 C924.9 290.5 926.6 279.6 928.5 271 C930.4 262.4 932 253.3 933.8 239.2 C935.6 225 937 204.2 939.2 186.1 C941.4 168 944.5 142.3 947.1 130.4 C949.8 118.5 952.5 114.5 955.1 114.5 C957.8 114.5 960.4 122 963 130.4 C965.6 138.8 968.6 152.1 971 164.9 C973.4 177.7 975.2 194.9 977.6 207.3 C980 219.7 983 231.2 985.6 239.2 C988.2 247.2 990.9 251.6 993.5 255.1 C996.1 258.6 998.6 260.4 1001.5 260.4 C1004.4 260.4 1007.5 257.1 1010.8 255.1 C1014.1 253.1 1018.3 249.5 1021.4 248.4 C1024.5 247.3 1026.6 248.2 1029.3 248.4 C1032 248.6 1034.6 251.3 1037.6 249.6 C1040.5 247.9 1044 246.2 1047 238.3 C1050 230.4 1052.9 215.2 1055.6 202.3 C1058.3 189.4 1060.7 170.7 1063.1 160.6 C1065.5 150.5 1067.7 145.8 1069.8 141.7 C1071.9 137.6 1073.8 136.3 1075.5 136 C1077.2 135.7 1078.5 137 1080.2 139.8 C1081.9 142.6 1083.9 146.1 1085.9 153 C1088 159.9 1090.1 171.3 1092.5 181.4 C1094.9 191.5 1097.3 203.2 1100.1 213.6 C1102.9 224 1106.3 236.3 1109.5 243.9 C1112.7 251.5 1116.2 256.2 1119 259.1 C1121.8 262 1124.1 261.6 1126.6 261 C1129.1 260.4 1130.4 259.1 1134.2 255.3 C1138 251.5 1144.6 243.4 1149.3 238.3 C1154 233.2 1158.8 230.7 1162.6 225 C1166.4 219.3 1168.2 215.2 1172 204.2 C1175.8 193.1 1181.8 168.2 1185.3 158.7 C1188.8 149.2 1190.7 149.5 1192.9 147.3 C1195.1 145.1 1196.7 144.6 1198.6 145.5 C1200.5 146.4 1202 148.6 1204.2 153 C1206.4 157.4 1209 163.2 1211.8 172 C1214.6 180.8 1217.8 194.1 1221.3 206.1 C1224.8 218.1 1229.5 235.4 1232.7 243.9 C1235.9 252.4 1237.7 254.3 1240.2 257.2 C1242.7 260.1 1245 261.3 1247.8 261 C1250.6 260.7 1253.8 259.4 1257.3 255.3 C1260.8 251.2 1264.5 244.3 1268.6 236.4 C1272.7 228.5 1278.1 216.2 1281.9 208 C1285.7 199.8 1288.4 193.7 1291.4 187.1 C1294.4 180.5 1297.2 173.2 1300 168.2 C1302.8 163.2 1305.1 160 1308 157 C1310.9 154 1314.6 150.6 1317.3 150.3 C1320 150 1321.3 150.8 1324.1 155.2 C1326.9 159.6 1331 168.8 1333.9 176.6 C1336.9 184.4 1339.3 193.5 1341.7 202 C1344.2 210.5 1346.1 218.9 1348.7 227.4 C1351.3 235.9 1354.8 247.4 1357.4 252.9 C1360 258.5 1362.2 259.2 1364.3 260.7 C1366.4 262.3 1368.1 262.4 1370.1 262.2 C1372.1 262 1373.7 262.4 1376 259.6 C1378.3 256.7 1381.2 250.4 1383.8 245 C1386.4 239.7 1389.5 233 1391.6 227.4 C1393.7 221.9 1394.2 218 1396.5 211.8 C1398.8 205.6 1402.2 197.1 1405.3 190.3 C1408.4 183.4 1411.5 176.3 1415.1 170.8 C1418.7 165.3 1423.2 160.2 1426.8 157.1 C1430.4 154.1 1433.8 152.2 1436.5 152.2 C1439.2 152.2 1440.5 152.7 1443.3 157 C1446.1 161.3 1450.2 170.4 1453.1 178 C1456 185.7 1458.4 194.7 1460.9 203 C1463.4 211.3 1465.2 219.6 1467.8 228 C1470.4 236.3 1473.9 247.6 1476.5 253.1 C1479.1 258.5 1481.3 259.2 1483.4 260.8 C1485.5 262.3 1487.3 262.4 1489.2 262.2 C1491.1 262 1492.7 262.4 1494.9 259.6 C1497.2 256.8 1500 250.5 1502.5 245.3 C1505 240 1508 233.3 1510.1 227.9 C1512.2 222.4 1512.7 218.6 1514.9 212.5 C1517.1 206.3 1520.4 197.9 1523.4 191.2 C1526.4 184.4 1529.4 177.4 1532.9 172 C1536.4 166.5 1540.8 161.5 1544.3 158.5 C1547.7 155.4 1551 153.6 1553.7 153.6 C1556.4 153.6 1557.9 154.1 1560.8 158.4 C1563.6 162.6 1567.9 171.6 1570.9 179.1 C1574 186.7 1576.5 195.6 1579 203.8 C1581.6 212 1583.5 220.2 1586.2 228.4 C1588.9 236.7 1592.5 247.8 1595.2 253.2 C1597.9 258.6 1600.2 259.3 1602.4 260.8 C1604.6 262.3 1606.5 262.4 1608.4 262.2 C1610.3 262 1611.9 262.4 1614 259.6 C1616.2 256.8 1619 250.5 1621.5 245.3 C1623.9 240 1626.9 233.3 1628.9 227.9 C1631 222.4 1631.5 218.6 1633.6 212.5 C1635.8 206.3 1639 197.9 1642 191.2 C1645 184.4 1648 177.4 1651.4 172 C1654.8 166.5 1659.1 161.5 1662.5 158.5 C1665.9 155.4 1669 153.6 1671.8 153.6 C1674.6 153.6 1676.2 154.1 1679.2 158.4 C1682.2 162.6 1686.7 171.6 1689.8 179.1 C1693 186.7 1695.7 195.6 1698.3 203.8 C1701 212 1703 220.2 1705.8 228.4 C1708.7 236.7 1712.5 247.8 1715.3 253.2 C1718.1 258.6 1720.5 259.3 1722.8 260.8 C1725.1 262.3 1727.2 262.4 1729.1 262.2 C1731 262 1732.4 262.4 1734.5 259.6 C1736.6 256.7 1739.2 250.4 1741.6 245 C1743.9 239.7 1746.8 233 1748.7 227.4 C1750.6 221.9 1751.1 218 1753.2 211.8 C1755.3 205.6 1758.3 197.1 1761.2 190.3 C1764 183.4 1766.9 176.3 1770.1 170.8 C1773.4 165.3 1777.5 160.2 1780.8 157.1 C1784 154.1 1786.9 152.2 1789.6 152.2 C1792.3 152.2 1794.1 152.7 1797.2 157 C1800.2 161.2 1804.8 170.1 1808.1 177.7 C1811.3 185.2 1814 194.1 1816.7 202.3 C1819.5 210.5 1821.5 218.7 1824.4 226.9 C1827.3 235.1 1831.2 246.2 1834.1 251.6 C1837 257 1839.4 257.7 1841.8 259.2 C1844.1 260.7 1846.3 260.8 1848.2 260.6 C1850.1 260.4 1851.4 260.8 1853.4 258 C1855.4 255.2 1858 249 1860.3 243.8 C1862.6 238.5 1865.3 232 1867.2 226.5 C1869.1 221.1 1869.5 217.3 1871.5 211.2 C1873.5 205.2 1876.5 196.8 1879.3 190.1 C1882 183.4 1884.8 176.4 1887.9 171 C1891.1 165.6 1895.1 160.7 1898.2 157.7 C1901.4 154.6 1904.1 152.8 1906.8 152.8 C1909.5 152.8 1911.4 153.3 1914.6 157.5 C1917.8 161.7 1922.5 170.5 1925.9 177.9 C1929.2 185.3 1932 194.1 1934.8 202.1 C1937.6 210.2 1939.8 218.3 1942.7 226.4 C1945.7 234.5 1949.7 245.4 1952.7 250.7 C1955.7 256 1958.2 256.7 1960.6 258.2 C1963.1 259.7 1965.3 259.8 1967.3 259.6 C1969.3 259.4 1970.5 259.8 1972.4 257 C1974.4 254.2 1976.9 247.9 1979.2 242.6 C1981.4 237.4 1984.1 230.7 1986 225.3 C1987.8 219.8 1988.3 215.9 1990.3 209.8 C1992.2 203.7 1995.2 195.3 1997.9 188.5 C2000.6 181.8 2003.3 174.7 2006.4 169.3 C2009.5 163.8 2013.5 158.9 2016.6 155.8 C2019.7 152.7 2022.3 150.9 2025 150.9 C2027.7 150.9 2029.7 151.4 2032.9 155.7 C2036.2 159.9 2040.9 168.9 2044.4 176.4 C2047.8 184 2050.6 192.9 2053.5 201.1 C2056.3 209.3 2058.5 217.6 2061.5 225.8 C2064.6 234 2068.6 245.2 2071.7 250.6 C2074.7 256 2077.3 256.7 2079.7 258.2 C2082.2 259.7 2084.1 260.5 2086.5 259.6 C2088.9 258.7 2093 253.9 2094.3 252.8" fill="none" stroke="#16238a" stroke-width="1.55" stroke-linejoin="round"/>
<path d="M168.5 795.3 L168.8 795.3 L169.2 710.4 L169.5 710.4 L170.2 710.4 L170.7 625.6 L171.3 625.6 L172 625.6 L172.5 964.5 L173.2 964.5 L174.2 964.5 L174.7 625.6 L175.7 625.6 L176.2 625.6 L176.7 710.4 L177.2 710.4 L177.4 710.4 L177.9 880.1 L178.2 880.1 L178.4 880.1 L178.9 964.5 L179.1 964.5 L179.9 964.5 L180.4 625.6 L181.2 625.6 L181.8 625.6 L182.3 964.5 L183 964.5 L183.8 964.5 L184.3 625.6 L185.2 625.6 L185.6 625.6 L186.1 710.4 L186.5 710.4 L188 710.4 L188.2 710.4 L188.7 964.5 L188.9 964.5 L189.6 964.5 L190.1 625.6 L190.8 625.6 L191.2 625.6 L191.8 964.5 L192.2 964.5 L192.8 964.5 L193.3 625.6 L194 625.6 L200 625.6 L200.5 625.6 L201 964.5 L201.5 964.5 L202.2 964.5 L202.7 625.6 L203.3 625.6 L203.8 625.6 L204.2 964.5 L204.7 964.5 L205.2 964.5 L205.7 880.1 L206.2 880.1 L206.2 880.1 L206.8 710.4 L206.8 710.4 L207.2 710.4 L207.7 625.6 L208.1 625.6 L208.6 625.6 L209.1 964.5 L209.6 964.5 L210.5 964.5 L211 625.6 L211.9 625.6 L212.9 625.6 L213.4 964.5 L214.5 964.5 L215 964.5 L215.5 710.4 L216 710.4 L216.4 710.4 L216.9 625.6 L217.4 625.6 L217.9 625.6 L218.4 964.5 L218.9 964.5 L219.6 964.5 L220.1 625.6 L220.7 625.6 L221.1 625.6 L221.6 964.5 L222.1 964.5 L222.8 964.5 L223.2 625.6 L223.9 625.6 L224.3 625.6 L224.8 880.1 L225.2 880.1 L225.8 880.1 L226.3 964.5 L227 964.5 L227.5 964.5 L228 625.6 L228.5 625.6 L228.8 750.6" fill="none" stroke="#16238a" stroke-width="1.35" stroke-linejoin="miter"/>
<path d="M228.8 750.6 L230.6 864.6 L232.5 835.4 L234.4 777.1 L236.3 747.9 L238.2 799.6 L240.1 851.4 L241.9 839.9 L243.8 812.2 L245.7 784.6 L247.6 773.1 L249.5 804.3 L251.4 835.5 L253.2 827.7 L255.1 809 L257 790.2 L258.9 782.4 L260.8 787.8 L262.7 800.9 L264.5 814.1 L266.4 819.5 L268.3 808.6 L270.2 786.7 L272.1 775.8 L274 781.8 L275.8 796.3 L277.7 810.9 L279.6 816.9 L281.5 806.2 L283.4 780.5 L285.3 754.7 L287.1 744 L289 763.5 L290.9 802.6 L292.8 822.2 L294.7 784.4 L296.6 746.6 L298.4 758.8 L300.3 788.4 L302.2 818 L304.1 830.2 L306 791.1 L307.9 751.9 L309.7 772.1 L311.6 812.6 L313.5 832.8 L315.4 813.2 L317.3 774.1 L319.2 754.6 L321 774.1 L322.9 813.2 L324.8 832.8 L326.7 813.6 L328.6 775.1 L330.5 755.9 L332.3 777.1 L334.2 819.6 L336.1 840.8 L338 817.9 L339.9 772.2 L341.8 749.3 L343.6 773.1 L345.5 820.9 L347.4 844.7 L349.3 816.5 L351.2 760.2 L353.1 732 L354.9 789 L356.8 846 L358.7 818.2 L360.6 762.5 L362.5 734.7 L364.4 763.9 L366.2 822.2 L368.1 851.4 L370 816.9 L371.9 747.9 L373.8 713.4 L375.7 746.9 L377.5 813.9 L379.4 847.4 L381.3 785.1 L383.2 722.7 L385.1 760.2 L387 835.1 L388.8 872.6 L390.7 831.8 L392.6 750.3 L394.5 709.5 L396.4 786.4 L398.3 863.3 L400.1 771.1 L402 679 L403.9 704.2 L405.8 765.2 L407.7 826.2 L409.5 851.4 L411.4 655 L413.3 683.8 L415.2 753.2 L417.1 822.6 L419 851.4 L420.8 745.3 L422.7 639.2 L424.6 691.9 L426.5 797.3 L428.4 850 L430.3 625.9 L432.1 683.3 L434 798 L435.9 855.4 L437.8 798 L439.7 683.3 L441.6 625.9 L443.4 732.6 L445.3 839.4 L447.2 786 L449.1 679.3 L451 625.9 L452.9 735.3 L454.7 844.7 L456.6 792.7 L458.5 688.6 L460.4 636.5 L462.3 741.9 L464.2 847.4 L466 804 L467.9 717.1 L469.8 673.7 L471.7 755.9 L473.6 838.1 L475.5 804 L477.3 735.6 L479.2 701.5 L481.1 761.9 L483 822.2 L484.9 794.7 L486.8 739.6 L488.6 712.1 L490.5 762.5 L492.4 812.9 L494.3 799 L496.2 785 L499.7 783.7" fill="none" stroke="#16238a" stroke-width="1.8" stroke-linejoin="round" shape-rendering="crispEdges"/>
<path d="M499.7 783.7 L513 787.7 L520 788.5 L522.1 788.5 L523.6 775 L525.7 749.4 L527.4 737.4 L529.2 752.3 L533.5 782.8 L537 768.6 L543.4 775 L545.6 772.2 L552.7 770 L559.8 765.1 L569.7 760.1 L586.8 757.2 L598.1 754.4 L609.5 746.6 L619.4 733.8 L625.1 719.6 L632.2 702.6 L639.3 697.6 L646.4 705.4 L653.5 724.6 L657.1 716.8 L658.5 696.9 L660.9 664.9 L662.8 681.3 L665 730 L667.7 760.8 L669 720 L670.6 684.1 L673 710 L675 745 L677 773.6 L679 740 L682 690.5 L684 730 L686 760 L687.6 772.2 L694 723.9 L697.6 760.8 L699 745.2 L708.9 745.2 L714.6 755.8 L718.9 744.5 L726 743 L730 738.8 C732.6 737.3 738.2 735.9 741.6 734.3 C745 732.7 747.2 731.5 750.6 729.1 C754 726.7 758.9 723.5 762.1 720.1 C765.3 716.7 766.6 712.9 769.8 708.6 C773 704.3 778.4 697.7 781.4 694.4 C784.4 691.1 785.9 689.6 787.8 688.6 C789.7 687.6 791.1 687.7 793 688.6 C794.9 689.5 797.5 690.9 799.4 693.8 C801.3 696.7 802.2 702.1 804.6 706 C807 709.9 810.5 714.9 813.5 716.9 C816.5 718.9 819.3 717.7 822.5 718.2 C825.7 718.7 829.8 719.9 832.8 720.1 C835.8 720.3 838.2 719.2 840.5 719.5 C842.8 719.8 843.3 722.6 846.3 722.1 C849.3 721.6 854.3 718.1 858.5 716.3 C862.7 714.5 867.1 712.9 871.4 711.1 C875.7 709.3 881 707.1 884.2 705.3 C887.4 703.5 887.9 702.1 890.7 700.2 C893.5 698.3 897.6 694.9 901 693.8 C904.4 692.7 908.6 693.5 911.2 693.8 C913.8 694.1 914.5 694.2 916.4 695.7 C918.3 697.2 920.2 700 922.8 702.8 C925.4 705.6 928.1 710 931.8 712.4 C935.4 714.8 939.8 715.9 944.7 716.9 C949.6 717.9 956.5 718.8 961.4 718.6 C966.3 718.4 969.9 716.6 974.2 715.6 C978.5 714.6 982.8 713.2 987.1 712.4 C991.4 711.5 995 712 999.9 710.5 C1004.8 709 1010.6 704.9 1016.7 703.7 C1022.8 702.5 1031.4 702.4 1036.7 703.1 C1042 703.8 1043.2 705.8 1048.7 707.7 C1054.2 709.6 1065.1 713.4 1070 714.3 C1074.9 715.2 1075.8 712.5 1078 713 C1080.2 713.5 1078 717.2 1083.3 717 C1088.6 716.8 1099.8 713.6 1110 711.7 C1120.2 709.8 1136.2 706.7 1144.7 705.8 C1153.2 704.9 1153.2 705.3 1160.7 706.3 C1168.2 707.3 1183.3 710.5 1190 711.7 C1196.7 713 1196.2 713.6 1200.7 713.8 C1205.2 714 1209.6 713.6 1216.7 713 C1223.8 712.4 1234.4 711.2 1243.3 710.3 C1252.2 709.4 1262 708 1270 707.7 C1278 707.4 1285.1 708.2 1291.3 708.5 C1297.5 708.8 1302.8 709 1307.3 709.5 C1311.8 710 1307.8 711.3 1318 711.7 C1328.2 712.1 1356.7 712.2 1368.7 711.7 C1380.7 711.2 1378.5 709.4 1390 709 C1401.5 708.6 1425.1 709 1438 709.5 C1450.9 710 1457.1 711.3 1467.3 711.7 C1477.5 712.1 1490.4 712.2 1499.3 711.7 C1508.2 711.2 1511.8 709.5 1520.7 709 C1529.7 708.5 1546.9 709 1553 709 C1559.1 709 1555.8 709 1557.1 709 C1558.5 709.1 1559.9 709.1 1561.3 709.2 C1562.6 709.3 1564 709.3 1565.4 709.4 C1566.8 709.5 1568.1 709.6 1569.5 709.7 C1570.9 709.8 1572.3 710 1573.7 710.1 C1575 710.2 1576.4 710.4 1577.8 710.5 C1579.2 710.6 1580.5 710.8 1581.9 710.9 C1583.3 711 1584.7 711.2 1586 711.3 C1587.4 711.4 1588.8 711.6 1590.2 711.7 C1591.6 711.8 1592.9 711.9 1594.3 712 C1595.7 712.1 1597.1 712.1 1598.4 712.2 C1599.8 712.3 1601.2 712.3 1602.6 712.4 C1603.9 712.4 1605.3 712.4 1606.7 712.4 C1608.1 712.4 1609.5 712.4 1610.8 712.4 C1612.2 712.3 1613.6 712.3 1615 712.3 C1616.4 712.2 1617.8 712.2 1619.1 712.1 C1620.5 712.1 1621.9 712 1623.3 711.9 C1624.7 711.9 1626 711.8 1627.4 711.7 C1628.8 711.6 1630.2 711.5 1631.6 711.4 C1632.9 711.3 1634.3 711.2 1635.7 711.1 C1637.1 711 1638.5 710.9 1639.8 710.8 C1641.2 710.7 1642.6 710.6 1644 710.5 C1645.4 710.4 1646.8 710.3 1648.1 710.2 C1649.5 710.1 1650.9 710 1652.3 709.9 C1653.7 709.8 1655 709.7 1656.4 709.7 C1657.8 709.6 1659.2 709.5 1660.6 709.5 C1661.9 709.4 1663.3 709.4 1664.7 709.3 C1666.1 709.3 1667.5 709.3 1668.9 709.2 C1670.2 709.2 1671.6 709.2 1673 709.2 C1674.4 709.2 1675.7 709.2 1677 709.2 C1678.4 709.3 1679.7 709.3 1681 709.4 C1682.4 709.4 1683.7 709.5 1685.1 709.5 C1686.4 709.6 1687.7 709.7 1689.1 709.8 C1690.4 709.9 1691.8 710 1693.1 710.1 C1694.4 710.2 1695.8 710.3 1697.1 710.4 C1698.5 710.6 1699.8 710.7 1701.2 710.8 C1702.5 710.9 1703.8 711 1705.2 711.2 C1706.5 711.3 1707.9 711.4 1709.2 711.5 C1710.5 711.6 1711.9 711.7 1713.2 711.8 C1714.6 711.9 1715.9 712 1717.2 712.1 C1718.6 712.1 1719.9 712.2 1721.3 712.2 C1722.6 712.3 1723.9 712.3 1725.3 712.4 C1726.6 712.4 1727.9 712.4 1729.3 712.4 C1730.7 712.4 1732.1 712.4 1733.5 712.4 C1735 712.3 1736.4 712.3 1737.8 712.3 C1739.2 712.2 1740.6 712.2 1742 712.1 C1743.5 712 1744.9 712 1746.3 711.9 C1747.7 711.8 1749.1 711.7 1750.5 711.6 C1751.9 711.5 1753.4 711.4 1754.8 711.3 C1756.2 711.2 1757.6 711.1 1759 711 C1760.4 710.9 1761.9 710.7 1763.3 710.6 C1764.7 710.5 1766.1 710.4 1767.5 710.3 C1768.9 710.2 1770.4 710.1 1771.8 710 C1773.2 709.9 1774.6 709.8 1776 709.7 C1777.4 709.6 1778.8 709.6 1780.3 709.5 C1781.7 709.4 1783.1 709.4 1784.5 709.3 C1785.9 709.3 1787.3 709.3 1788.8 709.2 C1790.2 709.2 1791.6 709.2 1793 709.2 C1794.4 709.2 1795.8 709.2 1797.2 709.2 C1798.6 709.3 1800 709.3 1801.4 709.3 C1802.8 709.4 1804.2 709.5 1805.6 709.5 C1807 709.6 1808.5 709.7 1809.9 709.8 C1811.3 709.9 1812.7 709.9 1814.1 710 C1815.5 710.1 1816.9 710.3 1818.3 710.4 C1819.7 710.5 1821.1 710.6 1822.5 710.7 C1823.9 710.8 1825.3 710.9 1826.7 711 C1828.1 711.1 1829.5 711.3 1830.9 711.4 C1832.3 711.5 1833.7 711.5 1835.1 711.6 C1836.5 711.7 1838 711.8 1839.4 711.9 C1840.8 711.9 1842.2 712 1843.6 712.1 C1845 712.1 1846.4 712.1 1847.8 712.2 C1849.2 712.2 1850.6 712.2 1852 712.2 C1853.4 712.2 1854.8 712.2 1856.2 712.2 C1857.6 712.1 1859 712.1 1860.4 712.1 C1861.8 712 1863.2 711.9 1864.6 711.9 C1866 711.8 1867.4 711.7 1868.8 711.6 C1870.2 711.5 1871.6 711.5 1873 711.4 C1874.4 711.3 1875.8 711.1 1877.2 711 C1878.6 710.9 1880 710.8 1881.3 710.7 C1882.7 710.6 1884.1 710.5 1885.5 710.4 C1886.9 710.3 1888.3 710.1 1889.7 710 C1891.1 709.9 1892.5 709.9 1893.9 709.8 C1895.3 709.7 1896.7 709.6 1898.1 709.5 C1899.5 709.5 1900.9 709.4 1902.3 709.3 C1903.7 709.3 1905.1 709.3 1906.5 709.2 C1907.9 709.2 1909.3 709.2 1910.7 709.2 C1912.1 709.2 1913.4 709.2 1914.8 709.2 C1916.1 709.3 1917.5 709.3 1918.9 709.3 C1920.2 709.4 1921.6 709.4 1923 709.5 C1924.3 709.5 1925.7 709.6 1927 709.7 C1928.4 709.8 1929.8 709.9 1931.1 710 C1932.5 710 1933.9 710.1 1935.2 710.2 C1936.6 710.3 1937.9 710.4 1939.3 710.5 C1940.7 710.6 1942 710.8 1943.4 710.9 C1944.8 711 1946.1 711.1 1947.5 711.2 C1948.8 711.3 1950.2 711.4 1951.6 711.5 C1952.9 711.5 1954.3 711.6 1955.7 711.7 C1957 711.8 1958.4 711.9 1959.7 711.9 C1961.1 712 1962.5 712 1963.8 712.1 C1965.2 712.1 1966.6 712.1 1967.9 712.2 C1969.3 712.2 1970.6 712.2 1972 712.2 C1973.4 712.2 1974.7 712.2 1976.1 712.2 C1977.4 712.1 1978.8 712.1 1980.1 712.1 C1981.5 712 1982.8 712 1984.2 711.9 C1985.6 711.8 1986.9 711.8 1988.3 711.7 C1989.6 711.6 1991 711.5 1992.3 711.4 C1993.7 711.3 1995 711.2 1996.4 711.1 C1997.8 711 1999.1 710.9 2000.5 710.8 C2001.8 710.7 2003.2 710.5 2004.5 710.4 C2005.9 710.3 2007.2 710.2 2008.6 710.1 C2010 710 2011.3 709.9 2012.7 709.8 C2014 709.7 2015.4 709.6 2016.7 709.5 C2018.1 709.4 2019.4 709.4 2020.8 709.3 C2022.2 709.2 2023.5 709.2 2024.9 709.1 C2026.2 709.1 2027.6 709.1 2028.9 709 C2030.3 709 2031.6 709 2033 709 C2034.4 709 2035.8 709 2037.2 709.1 C2038.7 709.1 2040.1 709.2 2041.5 709.2 C2042.9 709.3 2044.3 709.4 2045.8 709.5 C2047.2 709.6 2048.6 709.7 2050 709.9 C2051.4 710 2052.8 710.1 2054.2 710.3 C2055.7 710.4 2057.1 710.6 2058.5 710.7 C2059.9 710.8 2061.3 711 2062.8 711.1 C2064.2 711.3 2065.6 711.4 2067 711.5 C2068.4 711.7 2069.8 711.8 2071.2 711.9 C2072.7 712 2074.1 712.1 2075.5 712.2 C2076.9 712.2 2078.3 712.3 2079.8 712.3 C2081.2 712.4 2082.6 712.4 2084 712.4 C2085.4 712.4 2086.9 712.3 2088.3 712.2 C2089.8 712 2091.6 711.5 2092.7 711.5 C2093.7 711.6 2094.4 712.3 2094.7 712.4" fill="none" stroke="#16238a" stroke-width="1.55" stroke-linejoin="round"/>
</svg>
</body></html>
